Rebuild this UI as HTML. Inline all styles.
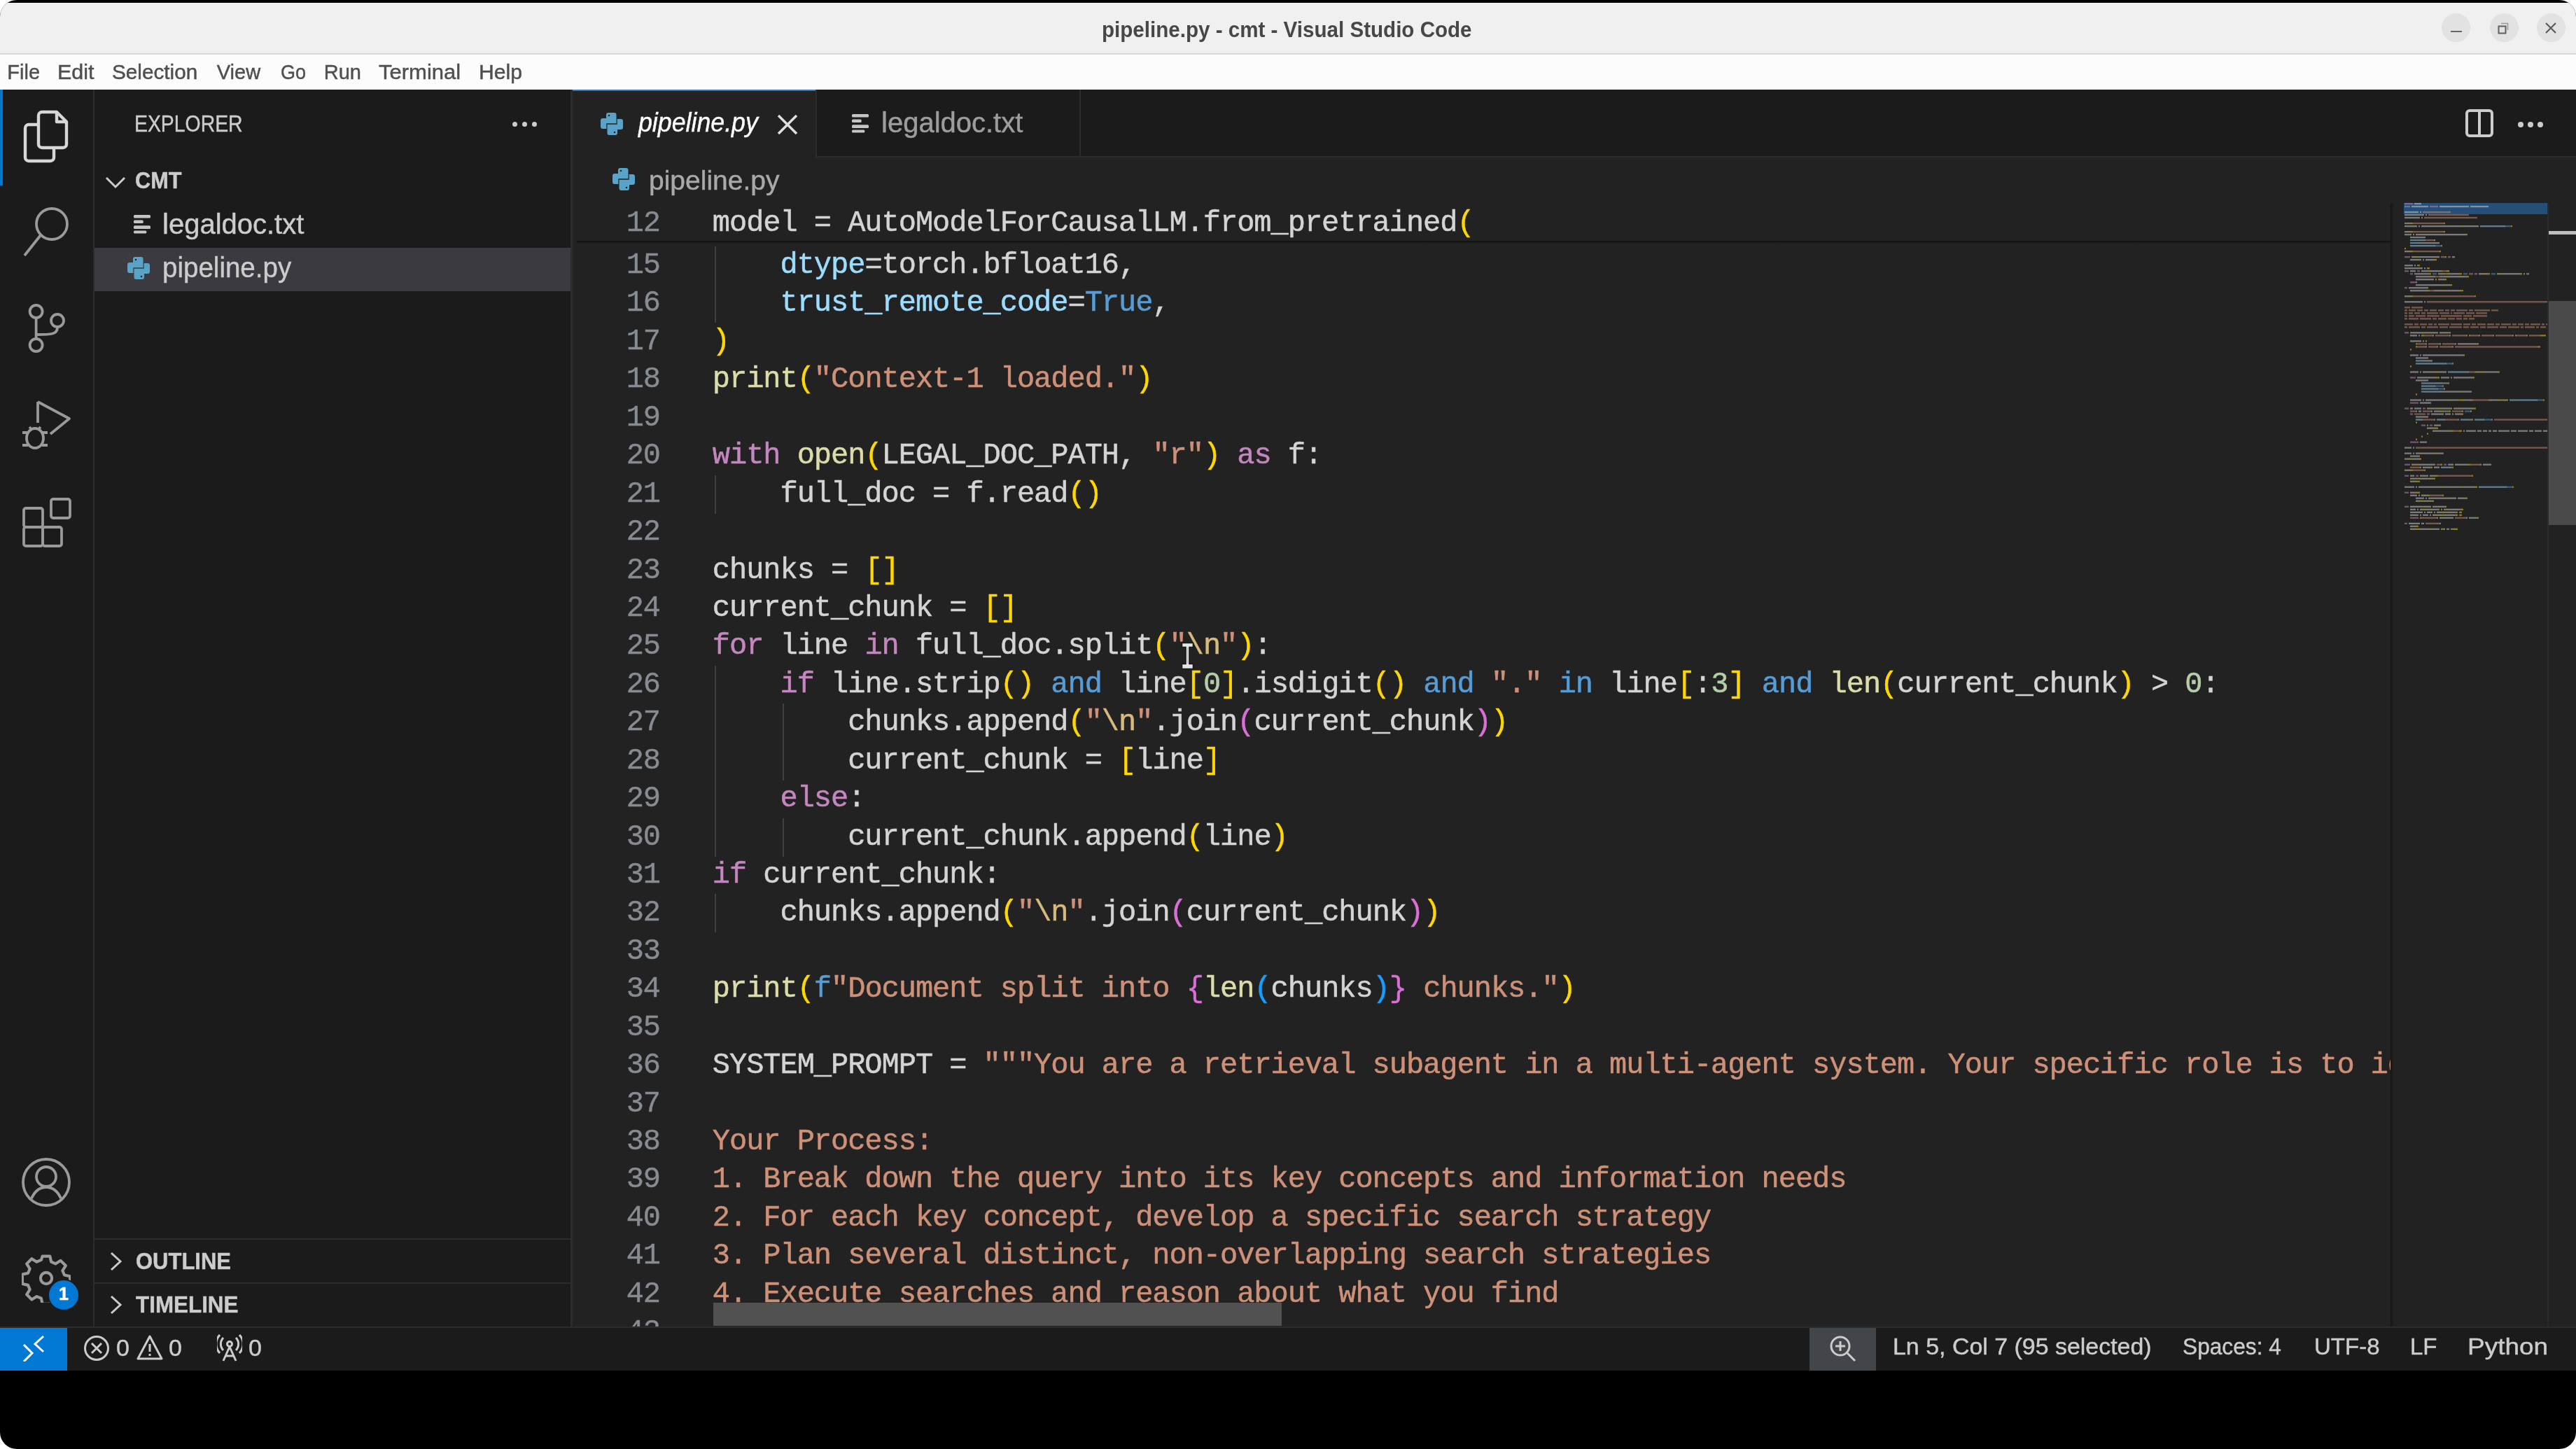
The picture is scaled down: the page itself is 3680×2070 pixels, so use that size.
<!DOCTYPE html>
<html><head><meta charset="utf-8"><title>pipeline.py - cmt - Visual Studio Code</title>
<style>
*{margin:0;padding:0;box-sizing:border-box}
html,body{width:3680px;height:2070px;overflow:hidden;background:#ffffff}
#frame{position:absolute;left:0;top:0;width:3680px;height:2070px;border-radius:24px;overflow:hidden;background:#000}
#wb{position:absolute;left:0;top:0;width:3680px;height:2070px;filter:blur(0.5px)}
.abs{position:absolute}
.ui{font-family:"Liberation Sans",sans-serif;position:absolute;white-space:pre;-webkit-text-stroke:0.45px currentColor}
.ln{position:absolute;left:823px;letter-spacing:-1.030px;-webkit-text-stroke:0.4px currentColor;width:120px;text-align:right;font-family:"Liberation Mono",monospace;font-size:42px;line-height:54.435px;color:#878b92;white-space:pre}
.cl{position:absolute;left:1017.8px;letter-spacing:-1.030px;-webkit-text-stroke:0.5px currentColor;font-family:"Liberation Mono",monospace;font-size:42px;line-height:54.435px;white-space:pre;color:#d4d4d4}
.ig{position:absolute;width:2px;height:54.935px;background:#404040}
</style></head>
<body><div id="frame"><div id="wb">
<div class="abs" style="left:0;top:4px;width:3680px;height:72px;background:#f0f0f0"></div>
<div class="abs" style="left:0;top:76px;width:3680px;height:2px;background:#d9d9d9"></div>
<div class="abs" style="left:0;top:78px;width:3680px;height:50px;background:#fcfcfc"></div>
<div class="ui" style="left:1574px;top:24.5px;font-size:31px;font-weight:bold;color:#474747;line-height:36px;transform:scaleX(0.954);transform-origin:0 0;-webkit-text-stroke:0">pipeline.py - cmt - Visual Studio Code</div>
<div class="abs" style="left:3488.1px;top:19px;width:41px;height:41px;border-radius:50%;background:#e2e2e2"></div>
<div class="abs" style="left:3556.5px;top:19px;width:41px;height:41px;border-radius:50%;background:#e2e2e2"></div>
<div class="abs" style="left:3623.5px;top:19px;width:41px;height:41px;border-radius:50%;background:#e2e2e2"></div>
<div class="abs" style="left:3501px;top:44px;width:16px;height:2.2px;background:#666"></div>
<svg class="abs" style="left:3566px;top:30px" width="20" height="20" viewBox="0 0 20 20"><rect x="3.5" y="7.5" width="10" height="10" fill="none" stroke="#606060" stroke-width="2"/><path d="M7 3.5h9.5v9.5" fill="none" stroke="#9a9a9a" stroke-width="1.5"/></svg>
<svg class="abs" style="left:3634px;top:30px" width="20" height="20" viewBox="0 0 20 20"><path d="M3 3L17 17M17 3L3 17" stroke="#5c5c5c" stroke-width="2.2"/></svg>
<div class="ui" style="left:10.3px;top:87px;font-size:29px;color:#4f4f4f;line-height:33px;transform:scaleX(1.0);transform-origin:0 0">File</div>
<div class="ui" style="left:81.6px;top:87px;font-size:29px;color:#4f4f4f;line-height:33px;transform:scaleX(1.05);transform-origin:0 0">Edit</div>
<div class="ui" style="left:160.3px;top:87px;font-size:29px;color:#4f4f4f;line-height:33px;transform:scaleX(1.025);transform-origin:0 0">Selection</div>
<div class="ui" style="left:309.8px;top:87px;font-size:29px;color:#4f4f4f;line-height:33px;transform:scaleX(1.0);transform-origin:0 0">View</div>
<div class="ui" style="left:400.8px;top:87px;font-size:29px;color:#4f4f4f;line-height:33px;transform:scaleX(0.93);transform-origin:0 0">Go</div>
<div class="ui" style="left:462.8px;top:87px;font-size:29px;color:#4f4f4f;line-height:33px;transform:scaleX(1.0);transform-origin:0 0">Run</div>
<div class="ui" style="left:540.8px;top:87px;font-size:29px;color:#4f4f4f;line-height:33px;transform:scaleX(1.069);transform-origin:0 0">Terminal</div>
<div class="ui" style="left:683.6px;top:87px;font-size:29px;color:#4f4f4f;line-height:33px;transform:scaleX(1.04);transform-origin:0 0">Help</div>
<div class="abs" style="left:0;top:128px;width:3680px;height:1830px;background:#222222"></div>
<div class="abs" style="left:0;top:128px;width:133px;height:1768px;background:#1b1b1b"></div>
<div class="abs" style="left:133px;top:128px;width:2px;height:1768px;background:#2c2c2c"></div>
<div class="abs" style="left:0;top:128px;width:4px;height:137px;background:#0078d4"></div>
<div class="abs" style="left:135px;top:128px;width:680px;height:1768px;background:#1b1b1b"></div>
<div class="abs" style="left:815px;top:128px;width:3px;height:1768px;background:#2c2c2c"></div>
<div class="abs" style="left:818px;top:128px;width:2862px;height:95px;background:#1b1b1b"></div>
<div class="abs" style="left:1165px;top:223px;width:2515px;height:2px;background:#2c2c2c"></div>
<div class="abs" style="left:818px;top:128px;width:347px;height:97px;background:#222222"></div>
<div class="abs" style="left:818px;top:127.5px;width:347px;height:2px;background:#3778b8"></div>
<div class="abs" style="left:1165px;top:128px;width:2px;height:95px;background:#2c2c2c"></div>
<div class="abs" style="left:1542px;top:128px;width:2px;height:95px;background:#2c2c2c"></div>
<div class="abs" style="left:0;top:1895px;width:3680px;height:2px;background:#2c2c2c"></div>
<div class="abs" style="left:0;top:1897px;width:3680px;height:61px;background:#1b1b1b"></div>
<div class="abs" style="left:0;top:1897px;width:96px;height:61px;background:#0078d4"></div>
<div class="abs" style="left:2585px;top:1897px;width:95px;height:61px;background:#42454a"></div>
<div class="ui" style="left:192px;top:157px;font-size:34px;color:#cccccc;line-height:38px;transform:scaleX(0.835);transform-origin:0 0">EXPLORER</div>
<div class="abs" style="left:732px;top:174px;width:7px;height:7px;border-radius:50%;background:#cccccc"></div>
<div class="abs" style="left:746px;top:174px;width:7px;height:7px;border-radius:50%;background:#cccccc"></div>
<div class="abs" style="left:760px;top:174px;width:7px;height:7px;border-radius:50%;background:#cccccc"></div>
<svg class="abs" style="left:150px;top:252px" width="30" height="18" viewBox="0 0 30 18"><path d="M2 2L15 15L28 2" fill="none" stroke="#cccccc" stroke-width="3"/></svg>
<div class="ui" style="left:193px;top:239px;font-size:33px;font-weight:bold;color:#cccccc;line-height:38px;transform:scaleX(0.93);transform-origin:0 0">CMT</div>
<svg class="abs" style="left:191px;top:307px" width="25" height="27" viewBox="0 0 25 27">
<g fill="#c5c5c5"><rect x="0" y="0" width="24" height="4.6" rx="1.5"/><rect x="0" y="7.6" width="13.7" height="4.5" rx="1.5"/>
<rect x="0" y="15.2" width="24" height="4.7" rx="1.5"/><rect x="0" y="22.6" width="18.3" height="4" rx="1.5"/></g></svg>
<div class="ui" style="left:232px;top:297px;font-size:40px;color:#cccccc;line-height:46px">legaldoc.txt</div>
<div class="abs" style="left:135px;top:354px;width:680px;height:62px;background:#3a3a40"></div>
<svg class="abs" style="left:182px;top:367px" width="32" height="32" viewBox="0 0 32 32">
<path fill="#5aa3c8" d="M8 3a3 3 0 0 1 3-3h8.5a3 3 0 0 1 3 3V15.3H8.3V23H3a3 3 0 0 1-3-3V11a3 3 0 0 1 3-3h5z"/><path fill="#5aa3c8" transform="rotate(180 16 16)" d="M8 3a3 3 0 0 1 3-3h8.5a3 3 0 0 1 3 3V15.3H8.3V23H3a3 3 0 0 1-3-3V11a3 3 0 0 1 3-3h5z"/>
<circle cx="12" cy="4" r="1.3" fill="#222222"/><circle cx="20" cy="28" r="1.3" fill="#222222"/>
</svg>
<div class="ui" style="left:232px;top:359px;font-size:40px;color:#cccccc;line-height:46px;transform:scaleX(0.963);transform-origin:0 0">pipeline.py</div>
<div class="abs" style="left:135px;top:1769px;width:680px;height:2px;background:#2c2c2c"></div>
<div class="abs" style="left:135px;top:1832px;width:680px;height:2px;background:#2c2c2c"></div>
<svg class="abs" style="left:156px;top:1788px" width="20" height="28" viewBox="0 0 20 28"><path d="M3 2L16 14L3 26" fill="none" stroke="#cccccc" stroke-width="3"/></svg>
<div class="ui" style="left:194px;top:1782px;font-size:34px;font-weight:bold;color:#cccccc;line-height:38px;transform:scaleX(0.911);transform-origin:0 0">OUTLINE</div>
<svg class="abs" style="left:156px;top:1850px" width="20" height="28" viewBox="0 0 20 28"><path d="M3 2L16 14L3 26" fill="none" stroke="#cccccc" stroke-width="3"/></svg>
<div class="ui" style="left:194px;top:1844px;font-size:34px;font-weight:bold;color:#cccccc;line-height:38px;transform:scaleX(0.923);transform-origin:0 0">TIMELINE</div>
<svg class="abs" style="left:33px;top:157px" width="66" height="76" viewBox="0 0 66 76"><g fill="none" stroke="#d7d7d7" stroke-width="4.4" stroke-linejoin="round">
<path d="M22 21H8a5 5 0 0 0-5 5v42a5 5 0 0 0 5 5h31a5 5 0 0 0 5-5v-14"/>
<path d="M22 8a5 5 0 0 1 5-5h21l14 14v32a5 5 0 0 1-5 5H27a5 5 0 0 1-5-5z"/><path d="M48 3v14h14"/></g></svg>
<svg class="abs" style="left:30px;top:292px" width="74" height="78" viewBox="0 0 74 78"><g fill="none" stroke="#9a9a9a" stroke-width="3.8"><circle cx="44" cy="28" r="22"/><path d="M28 44L5 73"/></g></svg>
<svg class="abs" style="left:36px;top:430px" width="62" height="78" viewBox="0 0 62 78"><g fill="none" stroke="#9a9a9a" stroke-width="3.8"><circle cx="15.6" cy="15" r="9"/><circle cx="15.6" cy="63" r="9"/><circle cx="46" cy="28" r="9"/><path d="M15.6 25v28"/><path d="M46 38c0 10-10 10-30 10"/></g></svg>
<svg class="abs" style="left:28px;top:570px" width="76" height="76" viewBox="0 0 76 76"><g fill="none" stroke="#9a9a9a" stroke-width="3.8" stroke-linejoin="round"><path d="M26 4V34M26 4L71 28L44 50"/>
<ellipse cx="22" cy="56" rx="12" ry="14"/><path d="M4 48h8M4 66h8M32 48h8M32 66h8M14 40l4 4M30 40l-4 4"/></g></svg>
<svg class="abs" style="left:30px;top:709px" width="74" height="74" viewBox="0 0 74 74"><g fill="none" stroke="#9a9a9a" stroke-width="3.8" stroke-linejoin="round"><rect x="4" y="17" width="27" height="27" rx="3"/><rect x="4" y="44" width="27" height="27" rx="3"/><rect x="31" y="44" width="27" height="27" rx="3"/><rect x="43" y="4" width="27" height="27" rx="3"/></g></svg>
<svg class="abs" style="left:30px;top:1652px" width="74" height="74" viewBox="0 0 74 74"><g fill="none" stroke="#9a9a9a" stroke-width="3.8"><circle cx="36" cy="37" r="33"/><circle cx="36" cy="29" r="14"/><path d="M15 60c5-11 12-16 21-16s16 5 21 16"/></g></svg>
<svg class="abs" style="left:31px;top:1791px" width="70" height="70" viewBox="0 0 78 78"><g fill="none" stroke="#9a9a9a" stroke-width="4.6" stroke-linejoin="round"><path d="M33 4h12l2 9 7 3 8-5 8 8-5 8 3 7 9 2v12l-9 2-3 7 5 8-8 8-8-5-7 3-2 9H33l-2-9-7-3-8 5-8-8 5-8-3-7-9-2V33l9-2 3-7-5-8 8-8 8 5 7-3z"/><circle cx="39" cy="39" r="9"/></g></svg>
<div class="abs" style="left:68px;top:1827px;width:46px;height:46px;border-radius:50%;background:#0078d4;border:2px solid #1b1b1b"></div>
<div class="ui" style="left:68px;top:1833px;width:46px;text-align:center;font-size:25px;font-weight:bold;color:#fff;line-height:30px">1</div>
<svg class="abs" style="left:858px;top:161px" width="32" height="32" viewBox="0 0 32 32">
<path fill="#5aa3c8" d="M8 3a3 3 0 0 1 3-3h8.5a3 3 0 0 1 3 3V15.3H8.3V23H3a3 3 0 0 1-3-3V11a3 3 0 0 1 3-3h5z"/><path fill="#5aa3c8" transform="rotate(180 16 16)" d="M8 3a3 3 0 0 1 3-3h8.5a3 3 0 0 1 3 3V15.3H8.3V23H3a3 3 0 0 1-3-3V11a3 3 0 0 1 3-3h5z"/>
<circle cx="12" cy="4" r="1.3" fill="#222222"/><circle cx="20" cy="28" r="1.3" fill="#222222"/>
</svg>
<div class="ui" style="left:912px;top:152px;font-size:39px;font-style:italic;color:#ffffff;line-height:46px;transform:scaleX(0.916);transform-origin:0 0">pipeline.py</div>
<svg class="abs" style="left:1110px;top:164px" width="30" height="28" viewBox="0 0 30 28"><path d="M2 1L28 27M28 1L2 27" stroke="#e0e0e0" stroke-width="3.5"/></svg>
<svg class="abs" style="left:1217px;top:163px" width="25" height="27" viewBox="0 0 25 27">
<g fill="#c5c5c5"><rect x="0" y="0" width="24" height="4.6" rx="1.5"/><rect x="0" y="7.6" width="13.7" height="4.5" rx="1.5"/>
<rect x="0" y="15.2" width="24" height="4.7" rx="1.5"/><rect x="0" y="22.6" width="18.3" height="4" rx="1.5"/></g></svg>
<div class="ui" style="left:1259px;top:152px;font-size:40px;color:#9d9d9d;line-height:46px">legaldoc.txt</div>
<svg class="abs" style="left:3522px;top:156px" width="40" height="40" viewBox="0 0 40 40"><g fill="none" stroke="#cccccc" stroke-width="4"><rect x="2" y="2" width="36" height="36" rx="4"/><path d="M20 2v36"/></g></svg>
<div class="abs" style="left:3597px;top:174px;width:8px;height:8px;border-radius:50%;background:#cccccc"></div>
<div class="abs" style="left:3611px;top:174px;width:8px;height:8px;border-radius:50%;background:#cccccc"></div>
<div class="abs" style="left:3625px;top:174px;width:8px;height:8px;border-radius:50%;background:#cccccc"></div>
<svg class="abs" style="left:875px;top:240px" width="32" height="32" viewBox="0 0 32 32">
<path fill="#5aa3c8" d="M8 3a3 3 0 0 1 3-3h8.5a3 3 0 0 1 3 3V15.3H8.3V23H3a3 3 0 0 1-3-3V11a3 3 0 0 1 3-3h5z"/><path fill="#5aa3c8" transform="rotate(180 16 16)" d="M8 3a3 3 0 0 1 3-3h8.5a3 3 0 0 1 3 3V15.3H8.3V23H3a3 3 0 0 1-3-3V11a3 3 0 0 1 3-3h5z"/>
<circle cx="12" cy="4" r="1.3" fill="#222222"/><circle cx="20" cy="28" r="1.3" fill="#222222"/>
</svg>
<div class="ui" style="left:927px;top:235px;font-size:39px;color:#a9a9a9;line-height:46px">pipeline.py</div>
<div class="abs" id="ed" style="left:818px;top:290px;width:2600px;height:1605px;overflow:hidden">
<div class="abs" style="left:-818px;top:-290px;width:3680px;height:2070px">
<div class="ln" style="top:352.05px">15</div>
<div class="cl" style="top:352.05px"><span style="color:#d4d4d4">    </span><span style="color:#9cdcfe">dtype</span><span style="color:#d4d4d4">=</span><span style="color:#d4d4d4">torch.bfloat16,</span></div>
<div class="ig" style="left:1020.8px;top:352.05px"></div>
<div class="ln" style="top:406.49px">16</div>
<div class="cl" style="top:406.49px"><span style="color:#d4d4d4">    </span><span style="color:#9cdcfe">trust_remote_code</span><span style="color:#d4d4d4">=</span><span style="color:#569cd6">True</span><span style="color:#d4d4d4">,</span></div>
<div class="ig" style="left:1020.8px;top:406.49px"></div>
<div class="ln" style="top:460.92px">17</div>
<div class="cl" style="top:460.92px"><span style="color:#ffd700">)</span></div>
<div class="ln" style="top:515.36px">18</div>
<div class="cl" style="top:515.36px"><span style="color:#dcdcaa">print</span><span style="color:#ffd700">(</span><span style="color:#ce9178">&quot;Context-1 loaded.&quot;</span><span style="color:#ffd700">)</span></div>
<div class="ln" style="top:569.79px">19</div>
<div class="ln" style="top:624.23px">20</div>
<div class="cl" style="top:624.23px"><span style="color:#c586c0">with</span><span style="color:#d4d4d4"> </span><span style="color:#dcdcaa">open</span><span style="color:#ffd700">(</span><span style="color:#d4d4d4">LEGAL_DOC_PATH, </span><span style="color:#ce9178">&quot;r&quot;</span><span style="color:#ffd700">)</span><span style="color:#d4d4d4"> </span><span style="color:#c586c0">as</span><span style="color:#d4d4d4"> f:</span></div>
<div class="ln" style="top:678.66px">21</div>
<div class="cl" style="top:678.66px"><span style="color:#d4d4d4">    full_doc = f.read</span><span style="color:#ffd700">()</span></div>
<div class="ig" style="left:1020.8px;top:678.66px"></div>
<div class="ln" style="top:733.10px">22</div>
<div class="ln" style="top:787.53px">23</div>
<div class="cl" style="top:787.53px"><span style="color:#d4d4d4">chunks = </span><span style="color:#ffd700">[]</span></div>
<div class="ln" style="top:841.97px">24</div>
<div class="cl" style="top:841.97px"><span style="color:#d4d4d4">current_chunk = </span><span style="color:#ffd700">[]</span></div>
<div class="ln" style="top:896.40px">25</div>
<div class="cl" style="top:896.40px"><span style="color:#c586c0">for</span><span style="color:#d4d4d4"> line </span><span style="color:#c586c0">in</span><span style="color:#d4d4d4"> full_doc.split</span><span style="color:#ffd700">(</span><span style="color:#ce9178">&quot;</span><span style="color:#d7ba7d">\n</span><span style="color:#ce9178">&quot;</span><span style="color:#ffd700">)</span><span style="color:#d4d4d4">:</span></div>
<div class="ln" style="top:950.84px">26</div>
<div class="cl" style="top:950.84px"><span style="color:#d4d4d4">    </span><span style="color:#c586c0">if</span><span style="color:#d4d4d4"> line.strip</span><span style="color:#ffd700">()</span><span style="color:#d4d4d4"> </span><span style="color:#569cd6">and</span><span style="color:#d4d4d4"> line</span><span style="color:#ffd700">[</span><span style="color:#b5cea8">0</span><span style="color:#ffd700">]</span><span style="color:#d4d4d4">.isdigit</span><span style="color:#ffd700">()</span><span style="color:#d4d4d4"> </span><span style="color:#569cd6">and</span><span style="color:#d4d4d4"> </span><span style="color:#ce9178">&quot;.&quot;</span><span style="color:#d4d4d4"> </span><span style="color:#569cd6">in</span><span style="color:#d4d4d4"> line</span><span style="color:#ffd700">[</span><span style="color:#d4d4d4">:</span><span style="color:#b5cea8">3</span><span style="color:#ffd700">]</span><span style="color:#d4d4d4"> </span><span style="color:#569cd6">and</span><span style="color:#d4d4d4"> </span><span style="color:#dcdcaa">len</span><span style="color:#ffd700">(</span><span style="color:#d4d4d4">current_chunk</span><span style="color:#ffd700">)</span><span style="color:#d4d4d4"> &gt; </span><span style="color:#b5cea8">0</span><span style="color:#d4d4d4">:</span></div>
<div class="ig" style="left:1020.8px;top:950.84px"></div>
<div class="ln" style="top:1005.27px">27</div>
<div class="cl" style="top:1005.27px"><span style="color:#d4d4d4">        chunks.append</span><span style="color:#ffd700">(</span><span style="color:#ce9178">&quot;</span><span style="color:#d7ba7d">\n</span><span style="color:#ce9178">&quot;</span><span style="color:#d4d4d4">.join</span><span style="color:#da70d6">(</span><span style="color:#d4d4d4">current_chunk</span><span style="color:#da70d6">)</span><span style="color:#ffd700">)</span></div>
<div class="ig" style="left:1020.8px;top:1005.27px"></div>
<div class="ig" style="left:1117.5px;top:1005.27px"></div>
<div class="ln" style="top:1059.70px">28</div>
<div class="cl" style="top:1059.70px"><span style="color:#d4d4d4">        current_chunk = </span><span style="color:#ffd700">[</span><span style="color:#d4d4d4">line</span><span style="color:#ffd700">]</span></div>
<div class="ig" style="left:1020.8px;top:1059.70px"></div>
<div class="ig" style="left:1117.5px;top:1059.70px"></div>
<div class="ln" style="top:1114.14px">29</div>
<div class="cl" style="top:1114.14px"><span style="color:#d4d4d4">    </span><span style="color:#c586c0">else</span><span style="color:#d4d4d4">:</span></div>
<div class="ig" style="left:1020.8px;top:1114.14px"></div>
<div class="ln" style="top:1168.58px">30</div>
<div class="cl" style="top:1168.58px"><span style="color:#d4d4d4">        current_chunk.append</span><span style="color:#ffd700">(</span><span style="color:#d4d4d4">line</span><span style="color:#ffd700">)</span></div>
<div class="ig" style="left:1020.8px;top:1168.58px"></div>
<div class="ig" style="left:1117.5px;top:1168.58px"></div>
<div class="ln" style="top:1223.01px">31</div>
<div class="cl" style="top:1223.01px"><span style="color:#c586c0">if</span><span style="color:#d4d4d4"> current_chunk:</span></div>
<div class="ln" style="top:1277.44px">32</div>
<div class="cl" style="top:1277.44px"><span style="color:#d4d4d4">    chunks.append</span><span style="color:#ffd700">(</span><span style="color:#ce9178">&quot;</span><span style="color:#d7ba7d">\n</span><span style="color:#ce9178">&quot;</span><span style="color:#d4d4d4">.join</span><span style="color:#da70d6">(</span><span style="color:#d4d4d4">current_chunk</span><span style="color:#da70d6">)</span><span style="color:#ffd700">)</span></div>
<div class="ig" style="left:1020.8px;top:1277.44px"></div>
<div class="ln" style="top:1331.88px">33</div>
<div class="ln" style="top:1386.32px">34</div>
<div class="cl" style="top:1386.32px"><span style="color:#dcdcaa">print</span><span style="color:#ffd700">(</span><span style="color:#569cd6">f</span><span style="color:#ce9178">&quot;Document split into </span><span style="color:#da70d6">{</span><span style="color:#dcdcaa">len</span><span style="color:#179fff">(</span><span style="color:#d4d4d4">chunks</span><span style="color:#179fff">)</span><span style="color:#da70d6">}</span><span style="color:#ce9178"> chunks.&quot;</span><span style="color:#ffd700">)</span></div>
<div class="ln" style="top:1440.75px">35</div>
<div class="ln" style="top:1495.18px">36</div>
<div class="cl" style="top:1495.18px"><span style="color:#d4d4d4">SYSTEM_PROMPT = </span><span style="color:#ce9178">&quot;&quot;&quot;You are a retrieval subagent in a multi-agent system. Your specific role is to identify</span></div>
<div class="ln" style="top:1549.62px">37</div>
<div class="ln" style="top:1604.06px">38</div>
<div class="cl" style="top:1604.06px"><span style="color:#ce9178">Your Process:</span></div>
<div class="ln" style="top:1658.49px">39</div>
<div class="cl" style="top:1658.49px"><span style="color:#ce9178">1. Break down the query into its key concepts and information needs</span></div>
<div class="ln" style="top:1712.92px">40</div>
<div class="cl" style="top:1712.92px"><span style="color:#ce9178">2. For each key concept, develop a specific search strategy</span></div>
<div class="ln" style="top:1767.36px">41</div>
<div class="cl" style="top:1767.36px"><span style="color:#ce9178">3. Plan several distinct, non-overlapping search strategies</span></div>
<div class="ln" style="top:1821.80px">42</div>
<div class="cl" style="top:1821.80px"><span style="color:#ce9178">4. Execute searches and reason about what you find</span></div>
<div class="ln" style="top:1876.23px">43</div>
</div></div>
<div class="abs" style="left:818px;top:290px;width:2600px;height:54px;background:#222222"></div>
<div class="ln" style="top:292.08px">12</div>
<div class="cl" style="top:292.08px"><span style="color:#d4d4d4">model = AutoModelForCausalLM.from_pretrained</span><span style="color:#ffd700">(</span></div>
<div class="abs" style="left:824px;top:344px;width:2594px;height:4px;background:linear-gradient(#111,#22222200)"></div>
<div class="abs" style="left:1019px;top:1861px;width:812px;height:33px;background:rgba(121,121,121,0.55)"></div>
<div class="abs" style="left:3415px;top:290px;width:5px;height:1605px;background:linear-gradient(90deg,#151515,#222222)"></div>
<div class="abs" style="left:3434px;top:290px;width:205px;height:16px;background:#264f78"></div>
<div class="abs" style="left:3639px;top:290px;width:2px;height:1605px;background:#2a2a2a"></div>
<div class="abs" style="left:3641px;top:430px;width:39px;height:320px;background:#4a4a4a"></div>
<div class="abs" style="left:3641px;top:330px;width:39px;height:5px;background:#bfbfbf"></div>
<svg class="abs" style="left:0;top:0;pointer-events:none" width="3680" height="2070"><defs><filter id="mmb" x="-1%" y="-1%" width="102%" height="102%"><feGaussianBlur stdDeviation="0.7"/></filter></defs><g opacity="0.5" filter="url(#mmb)"><rect x="3435.0" y="289.9" width="12.0" height="2.3" fill="#c586c0"/><rect x="3449.0" y="289.9" width="10.0" height="2.3" fill="#d4d4d4"/><rect x="3435.0" y="293.9" width="8.0" height="2.3" fill="#c586c0"/><rect x="3445.0" y="293.9" width="24.0" height="2.3" fill="#d4d4d4"/><rect x="3471.0" y="293.9" width="12.0" height="2.3" fill="#c586c0"/><rect x="3485.0" y="293.9" width="40.0" height="2.3" fill="#d4d4d4"/><rect x="3525.0" y="293.9" width="2.0" height="2.3" fill="#d4d4d4"/><rect x="3529.0" y="293.9" width="26.0" height="2.3" fill="#d4d4d4"/><rect x="3435.0" y="301.9" width="20.0" height="2.3" fill="#d4d4d4"/><rect x="3457.0" y="301.9" width="2.0" height="2.3" fill="#d4d4d4"/><rect x="3461.0" y="301.9" width="40.0" height="2.3" fill="#ce9178"/><rect x="3435.0" y="305.9" width="28.0" height="2.3" fill="#d4d4d4"/><rect x="3465.0" y="305.9" width="2.0" height="2.3" fill="#d4d4d4"/><rect x="3469.0" y="305.9" width="58.0" height="2.3" fill="#ce9178"/><rect x="3435.0" y="309.9" width="22.0" height="2.3" fill="#d4d4d4"/><rect x="3459.0" y="309.9" width="2.0" height="2.3" fill="#d4d4d4"/><rect x="3463.0" y="309.9" width="76.0" height="2.3" fill="#ce9178"/><rect x="3435.0" y="317.9" width="10.0" height="2.3" fill="#dcdcaa"/><rect x="3445.0" y="317.9" width="2.0" height="2.3" fill="#ffd700"/><rect x="3447.0" y="317.9" width="44.0" height="2.3" fill="#ce9178"/><rect x="3491.0" y="317.9" width="2.0" height="2.3" fill="#ffd700"/><rect x="3435.0" y="322.0" width="18.0" height="2.3" fill="#d4d4d4"/><rect x="3455.0" y="322.0" width="2.0" height="2.3" fill="#d4d4d4"/><rect x="3459.0" y="322.0" width="26.0" height="2.3" fill="#d4d4d4"/><rect x="3485.0" y="322.0" width="2.0" height="2.3" fill="#d4d4d4"/><rect x="3487.0" y="322.0" width="30.0" height="2.3" fill="#d4d4d4"/><rect x="3517.0" y="322.0" width="2.0" height="2.3" fill="#ffd700"/><rect x="3519.0" y="322.0" width="20.0" height="2.3" fill="#d4d4d4"/><rect x="3539.0" y="322.0" width="2.0" height="2.3" fill="#d4d4d4"/><rect x="3543.0" y="322.0" width="34.0" height="2.3" fill="#9cdcfe"/><rect x="3577.0" y="322.0" width="2.0" height="2.3" fill="#d4d4d4"/><rect x="3579.0" y="322.0" width="8.0" height="2.3" fill="#569cd6"/><rect x="3587.0" y="322.0" width="2.0" height="2.3" fill="#ffd700"/><rect x="3435.0" y="330.0" width="10.0" height="2.3" fill="#dcdcaa"/><rect x="3445.0" y="330.0" width="2.0" height="2.3" fill="#ffd700"/><rect x="3447.0" y="330.0" width="44.0" height="2.3" fill="#ce9178"/><rect x="3491.0" y="330.0" width="2.0" height="2.3" fill="#ffd700"/><rect x="3435.0" y="334.0" width="10.0" height="2.3" fill="#d4d4d4"/><rect x="3447.0" y="334.0" width="2.0" height="2.3" fill="#d4d4d4"/><rect x="3451.0" y="334.0" width="40.0" height="2.3" fill="#d4d4d4"/><rect x="3491.0" y="334.0" width="2.0" height="2.3" fill="#d4d4d4"/><rect x="3493.0" y="334.0" width="30.0" height="2.3" fill="#d4d4d4"/><rect x="3523.0" y="334.0" width="2.0" height="2.3" fill="#ffd700"/><rect x="3443.0" y="338.0" width="20.0" height="2.3" fill="#d4d4d4"/><rect x="3463.0" y="338.0" width="2.0" height="2.3" fill="#d4d4d4"/><rect x="3443.0" y="342.0" width="20.0" height="2.3" fill="#9cdcfe"/><rect x="3463.0" y="342.0" width="2.0" height="2.3" fill="#d4d4d4"/><rect x="3465.0" y="342.0" width="12.0" height="2.3" fill="#ce9178"/><rect x="3477.0" y="342.0" width="2.0" height="2.3" fill="#d4d4d4"/><rect x="3443.0" y="346.0" width="10.0" height="2.3" fill="#9cdcfe"/><rect x="3453.0" y="346.0" width="2.0" height="2.3" fill="#d4d4d4"/><rect x="3455.0" y="346.0" width="10.0" height="2.3" fill="#d4d4d4"/><rect x="3465.0" y="346.0" width="2.0" height="2.3" fill="#d4d4d4"/><rect x="3467.0" y="346.0" width="16.0" height="2.3" fill="#d4d4d4"/><rect x="3483.0" y="346.0" width="2.0" height="2.3" fill="#d4d4d4"/><rect x="3443.0" y="350.0" width="34.0" height="2.3" fill="#9cdcfe"/><rect x="3477.0" y="350.0" width="2.0" height="2.3" fill="#d4d4d4"/><rect x="3479.0" y="350.0" width="8.0" height="2.3" fill="#569cd6"/><rect x="3487.0" y="350.0" width="2.0" height="2.3" fill="#d4d4d4"/><rect x="3435.0" y="354.0" width="2.0" height="2.3" fill="#ffd700"/><rect x="3435.0" y="358.0" width="10.0" height="2.3" fill="#dcdcaa"/><rect x="3445.0" y="358.0" width="2.0" height="2.3" fill="#ffd700"/><rect x="3447.0" y="358.0" width="38.0" height="2.3" fill="#ce9178"/><rect x="3485.0" y="358.0" width="2.0" height="2.3" fill="#ffd700"/><rect x="3435.0" y="366.0" width="8.0" height="2.3" fill="#c586c0"/><rect x="3445.0" y="366.0" width="8.0" height="2.3" fill="#dcdcaa"/><rect x="3453.0" y="366.0" width="2.0" height="2.3" fill="#ffd700"/><rect x="3455.0" y="366.0" width="28.0" height="2.3" fill="#d4d4d4"/><rect x="3483.0" y="366.0" width="2.0" height="2.3" fill="#d4d4d4"/><rect x="3487.0" y="366.0" width="6.0" height="2.3" fill="#ce9178"/><rect x="3493.0" y="366.0" width="2.0" height="2.3" fill="#ffd700"/><rect x="3497.0" y="366.0" width="4.0" height="2.3" fill="#c586c0"/><rect x="3503.0" y="366.0" width="2.0" height="2.3" fill="#d4d4d4"/><rect x="3505.0" y="366.0" width="2.0" height="2.3" fill="#d4d4d4"/><rect x="3443.0" y="370.0" width="16.0" height="2.3" fill="#d4d4d4"/><rect x="3461.0" y="370.0" width="2.0" height="2.3" fill="#d4d4d4"/><rect x="3465.0" y="370.0" width="2.0" height="2.3" fill="#d4d4d4"/><rect x="3467.0" y="370.0" width="2.0" height="2.3" fill="#d4d4d4"/><rect x="3469.0" y="370.0" width="8.0" height="2.3" fill="#d4d4d4"/><rect x="3477.0" y="370.0" width="2.0" height="2.3" fill="#ffd700"/><rect x="3479.0" y="370.0" width="2.0" height="2.3" fill="#ffd700"/><rect x="3435.0" y="378.1" width="12.0" height="2.3" fill="#d4d4d4"/><rect x="3449.0" y="378.1" width="2.0" height="2.3" fill="#d4d4d4"/><rect x="3453.0" y="378.1" width="2.0" height="2.3" fill="#ffd700"/><rect x="3455.0" y="378.1" width="2.0" height="2.3" fill="#ffd700"/><rect x="3435.0" y="382.1" width="26.0" height="2.3" fill="#d4d4d4"/><rect x="3463.0" y="382.1" width="2.0" height="2.3" fill="#d4d4d4"/><rect x="3467.0" y="382.1" width="2.0" height="2.3" fill="#ffd700"/><rect x="3469.0" y="382.1" width="2.0" height="2.3" fill="#ffd700"/><rect x="3435.0" y="386.1" width="6.0" height="2.3" fill="#c586c0"/><rect x="3443.0" y="386.1" width="8.0" height="2.3" fill="#d4d4d4"/><rect x="3453.0" y="386.1" width="4.0" height="2.3" fill="#c586c0"/><rect x="3459.0" y="386.1" width="16.0" height="2.3" fill="#d4d4d4"/><rect x="3475.0" y="386.1" width="2.0" height="2.3" fill="#d4d4d4"/><rect x="3477.0" y="386.1" width="10.0" height="2.3" fill="#d4d4d4"/><rect x="3487.0" y="386.1" width="2.0" height="2.3" fill="#ffd700"/><rect x="3489.0" y="386.1" width="6.0" height="2.3" fill="#ce9178"/><rect x="3495.0" y="386.1" width="2.0" height="2.3" fill="#ffd700"/><rect x="3497.0" y="386.1" width="2.0" height="2.3" fill="#d4d4d4"/><rect x="3443.0" y="390.1" width="4.0" height="2.3" fill="#c586c0"/><rect x="3449.0" y="390.1" width="8.0" height="2.3" fill="#d4d4d4"/><rect x="3457.0" y="390.1" width="2.0" height="2.3" fill="#d4d4d4"/><rect x="3459.0" y="390.1" width="10.0" height="2.3" fill="#d4d4d4"/><rect x="3469.0" y="390.1" width="2.0" height="2.3" fill="#ffd700"/><rect x="3471.0" y="390.1" width="2.0" height="2.3" fill="#ffd700"/><rect x="3475.0" y="390.1" width="6.0" height="2.3" fill="#569cd6"/><rect x="3483.0" y="390.1" width="8.0" height="2.3" fill="#d4d4d4"/><rect x="3491.0" y="390.1" width="2.0" height="2.3" fill="#ffd700"/><rect x="3493.0" y="390.1" width="2.0" height="2.3" fill="#b5cea8"/><rect x="3495.0" y="390.1" width="2.0" height="2.3" fill="#ffd700"/><rect x="3497.0" y="390.1" width="2.0" height="2.3" fill="#d4d4d4"/><rect x="3499.0" y="390.1" width="14.0" height="2.3" fill="#d4d4d4"/><rect x="3513.0" y="390.1" width="2.0" height="2.3" fill="#ffd700"/><rect x="3515.0" y="390.1" width="2.0" height="2.3" fill="#ffd700"/><rect x="3519.0" y="390.1" width="6.0" height="2.3" fill="#569cd6"/><rect x="3527.0" y="390.1" width="6.0" height="2.3" fill="#ce9178"/><rect x="3535.0" y="390.1" width="4.0" height="2.3" fill="#c586c0"/><rect x="3541.0" y="390.1" width="8.0" height="2.3" fill="#d4d4d4"/><rect x="3549.0" y="390.1" width="2.0" height="2.3" fill="#ffd700"/><rect x="3551.0" y="390.1" width="2.0" height="2.3" fill="#d4d4d4"/><rect x="3553.0" y="390.1" width="2.0" height="2.3" fill="#b5cea8"/><rect x="3555.0" y="390.1" width="2.0" height="2.3" fill="#ffd700"/><rect x="3559.0" y="390.1" width="6.0" height="2.3" fill="#569cd6"/><rect x="3567.0" y="390.1" width="6.0" height="2.3" fill="#dcdcaa"/><rect x="3573.0" y="390.1" width="2.0" height="2.3" fill="#ffd700"/><rect x="3575.0" y="390.1" width="26.0" height="2.3" fill="#d4d4d4"/><rect x="3601.0" y="390.1" width="2.0" height="2.3" fill="#ffd700"/><rect x="3605.0" y="390.1" width="2.0" height="2.3" fill="#d4d4d4"/><rect x="3609.0" y="390.1" width="2.0" height="2.3" fill="#b5cea8"/><rect x="3611.0" y="390.1" width="2.0" height="2.3" fill="#d4d4d4"/><rect x="3451.0" y="394.1" width="12.0" height="2.3" fill="#d4d4d4"/><rect x="3463.0" y="394.1" width="2.0" height="2.3" fill="#d4d4d4"/><rect x="3465.0" y="394.1" width="12.0" height="2.3" fill="#d4d4d4"/><rect x="3477.0" y="394.1" width="2.0" height="2.3" fill="#ffd700"/><rect x="3479.0" y="394.1" width="6.0" height="2.3" fill="#ce9178"/><rect x="3485.0" y="394.1" width="2.0" height="2.3" fill="#d4d4d4"/><rect x="3487.0" y="394.1" width="8.0" height="2.3" fill="#d4d4d4"/><rect x="3495.0" y="394.1" width="2.0" height="2.3" fill="#ffd700"/><rect x="3497.0" y="394.1" width="26.0" height="2.3" fill="#d4d4d4"/><rect x="3523.0" y="394.1" width="2.0" height="2.3" fill="#ffd700"/><rect x="3525.0" y="394.1" width="2.0" height="2.3" fill="#ffd700"/><rect x="3451.0" y="398.1" width="26.0" height="2.3" fill="#d4d4d4"/><rect x="3479.0" y="398.1" width="2.0" height="2.3" fill="#d4d4d4"/><rect x="3483.0" y="398.1" width="2.0" height="2.3" fill="#ffd700"/><rect x="3485.0" y="398.1" width="8.0" height="2.3" fill="#d4d4d4"/><rect x="3493.0" y="398.1" width="2.0" height="2.3" fill="#ffd700"/><rect x="3443.0" y="402.1" width="8.0" height="2.3" fill="#c586c0"/><rect x="3451.0" y="402.1" width="2.0" height="2.3" fill="#d4d4d4"/><rect x="3451.0" y="406.1" width="26.0" height="2.3" fill="#d4d4d4"/><rect x="3477.0" y="406.1" width="2.0" height="2.3" fill="#d4d4d4"/><rect x="3479.0" y="406.1" width="12.0" height="2.3" fill="#d4d4d4"/><rect x="3491.0" y="406.1" width="2.0" height="2.3" fill="#ffd700"/><rect x="3493.0" y="406.1" width="8.0" height="2.3" fill="#d4d4d4"/><rect x="3501.0" y="406.1" width="2.0" height="2.3" fill="#ffd700"/><rect x="3435.0" y="410.1" width="4.0" height="2.3" fill="#c586c0"/><rect x="3441.0" y="410.1" width="26.0" height="2.3" fill="#d4d4d4"/><rect x="3467.0" y="410.1" width="2.0" height="2.3" fill="#d4d4d4"/><rect x="3443.0" y="414.1" width="12.0" height="2.3" fill="#d4d4d4"/><rect x="3455.0" y="414.1" width="2.0" height="2.3" fill="#d4d4d4"/><rect x="3457.0" y="414.1" width="12.0" height="2.3" fill="#d4d4d4"/><rect x="3469.0" y="414.1" width="2.0" height="2.3" fill="#ffd700"/><rect x="3471.0" y="414.1" width="6.0" height="2.3" fill="#ce9178"/><rect x="3477.0" y="414.1" width="2.0" height="2.3" fill="#d4d4d4"/><rect x="3479.0" y="414.1" width="8.0" height="2.3" fill="#d4d4d4"/><rect x="3487.0" y="414.1" width="2.0" height="2.3" fill="#ffd700"/><rect x="3489.0" y="414.1" width="26.0" height="2.3" fill="#d4d4d4"/><rect x="3515.0" y="414.1" width="2.0" height="2.3" fill="#ffd700"/><rect x="3517.0" y="414.1" width="2.0" height="2.3" fill="#ffd700"/><rect x="3435.0" y="422.1" width="10.0" height="2.3" fill="#dcdcaa"/><rect x="3445.0" y="422.1" width="2.0" height="2.3" fill="#ffd700"/><rect x="3447.0" y="422.1" width="88.0" height="2.3" fill="#ce9178"/><rect x="3535.0" y="422.1" width="2.0" height="2.3" fill="#ffd700"/><rect x="3435.0" y="430.1" width="26.0" height="2.3" fill="#d4d4d4"/><rect x="3463.0" y="430.1" width="2.0" height="2.3" fill="#d4d4d4"/><rect x="3467.0" y="430.1" width="4.0" height="2.3" fill="#ce9178"/><rect x="3471.0" y="430.1" width="168.0" height="2.3" fill="#ce9178"/><rect x="3435.0" y="438.2" width="8.0" height="2.3" fill="#ce9178"/><rect x="3445.0" y="438.2" width="16.0" height="2.3" fill="#ce9178"/><rect x="3435.0" y="442.2" width="4.0" height="2.3" fill="#ce9178"/><rect x="3441.0" y="442.2" width="10.0" height="2.3" fill="#ce9178"/><rect x="3453.0" y="442.2" width="8.0" height="2.3" fill="#ce9178"/><rect x="3463.0" y="442.2" width="6.0" height="2.3" fill="#ce9178"/><rect x="3471.0" y="442.2" width="10.0" height="2.3" fill="#ce9178"/><rect x="3483.0" y="442.2" width="8.0" height="2.3" fill="#ce9178"/><rect x="3493.0" y="442.2" width="6.0" height="2.3" fill="#ce9178"/><rect x="3501.0" y="442.2" width="6.0" height="2.3" fill="#ce9178"/><rect x="3509.0" y="442.2" width="16.0" height="2.3" fill="#ce9178"/><rect x="3527.0" y="442.2" width="6.0" height="2.3" fill="#ce9178"/><rect x="3535.0" y="442.2" width="22.0" height="2.3" fill="#ce9178"/><rect x="3559.0" y="442.2" width="10.0" height="2.3" fill="#ce9178"/><rect x="3435.0" y="446.2" width="4.0" height="2.3" fill="#ce9178"/><rect x="3441.0" y="446.2" width="6.0" height="2.3" fill="#ce9178"/><rect x="3449.0" y="446.2" width="8.0" height="2.3" fill="#ce9178"/><rect x="3459.0" y="446.2" width="6.0" height="2.3" fill="#ce9178"/><rect x="3467.0" y="446.2" width="16.0" height="2.3" fill="#ce9178"/><rect x="3485.0" y="446.2" width="14.0" height="2.3" fill="#ce9178"/><rect x="3501.0" y="446.2" width="2.0" height="2.3" fill="#ce9178"/><rect x="3505.0" y="446.2" width="16.0" height="2.3" fill="#ce9178"/><rect x="3523.0" y="446.2" width="12.0" height="2.3" fill="#ce9178"/><rect x="3537.0" y="446.2" width="16.0" height="2.3" fill="#ce9178"/><rect x="3435.0" y="450.2" width="4.0" height="2.3" fill="#ce9178"/><rect x="3441.0" y="450.2" width="8.0" height="2.3" fill="#ce9178"/><rect x="3451.0" y="450.2" width="14.0" height="2.3" fill="#ce9178"/><rect x="3467.0" y="450.2" width="18.0" height="2.3" fill="#ce9178"/><rect x="3487.0" y="450.2" width="30.0" height="2.3" fill="#ce9178"/><rect x="3519.0" y="450.2" width="12.0" height="2.3" fill="#ce9178"/><rect x="3533.0" y="450.2" width="20.0" height="2.3" fill="#ce9178"/><rect x="3435.0" y="454.2" width="4.0" height="2.3" fill="#ce9178"/><rect x="3441.0" y="454.2" width="14.0" height="2.3" fill="#ce9178"/><rect x="3457.0" y="454.2" width="16.0" height="2.3" fill="#ce9178"/><rect x="3475.0" y="454.2" width="6.0" height="2.3" fill="#ce9178"/><rect x="3483.0" y="454.2" width="12.0" height="2.3" fill="#ce9178"/><rect x="3497.0" y="454.2" width="10.0" height="2.3" fill="#ce9178"/><rect x="3509.0" y="454.2" width="8.0" height="2.3" fill="#ce9178"/><rect x="3519.0" y="454.2" width="6.0" height="2.3" fill="#ce9178"/><rect x="3527.0" y="454.2" width="8.0" height="2.3" fill="#ce9178"/><rect x="3435.0" y="462.2" width="12.0" height="2.3" fill="#ce9178"/><rect x="3449.0" y="462.2" width="6.0" height="2.3" fill="#ce9178"/><rect x="3457.0" y="462.2" width="10.0" height="2.3" fill="#ce9178"/><rect x="3469.0" y="462.2" width="6.0" height="2.3" fill="#ce9178"/><rect x="3477.0" y="462.2" width="4.0" height="2.3" fill="#ce9178"/><rect x="3483.0" y="462.2" width="16.0" height="2.3" fill="#ce9178"/><rect x="3501.0" y="462.2" width="16.0" height="2.3" fill="#ce9178"/><rect x="3519.0" y="462.2" width="10.0" height="2.3" fill="#ce9178"/><rect x="3531.0" y="462.2" width="6.0" height="2.3" fill="#ce9178"/><rect x="3539.0" y="462.2" width="12.0" height="2.3" fill="#ce9178"/><rect x="3553.0" y="462.2" width="10.0" height="2.3" fill="#ce9178"/><rect x="3565.0" y="462.2" width="6.0" height="2.3" fill="#ce9178"/><rect x="3573.0" y="462.2" width="14.0" height="2.3" fill="#ce9178"/><rect x="3589.0" y="462.2" width="6.0" height="2.3" fill="#ce9178"/><rect x="3597.0" y="462.2" width="8.0" height="2.3" fill="#ce9178"/><rect x="3607.0" y="462.2" width="6.0" height="2.3" fill="#ce9178"/><rect x="3615.0" y="462.2" width="14.0" height="2.3" fill="#ce9178"/><rect x="3631.0" y="462.2" width="4.0" height="2.3" fill="#ce9178"/><rect x="3637.0" y="462.2" width="2.0" height="2.3" fill="#ce9178"/><rect x="3435.0" y="466.2" width="4.0" height="2.3" fill="#ce9178"/><rect x="3441.0" y="466.2" width="16.0" height="2.3" fill="#ce9178"/><rect x="3459.0" y="466.2" width="6.0" height="2.3" fill="#ce9178"/><rect x="3467.0" y="466.2" width="16.0" height="2.3" fill="#ce9178"/><rect x="3485.0" y="466.2" width="12.0" height="2.3" fill="#ce9178"/><rect x="3499.0" y="466.2" width="18.0" height="2.3" fill="#ce9178"/><rect x="3519.0" y="466.2" width="8.0" height="2.3" fill="#ce9178"/><rect x="3529.0" y="466.2" width="12.0" height="2.3" fill="#ce9178"/><rect x="3543.0" y="466.2" width="8.0" height="2.3" fill="#ce9178"/><rect x="3553.0" y="466.2" width="16.0" height="2.3" fill="#ce9178"/><rect x="3571.0" y="466.2" width="10.0" height="2.3" fill="#ce9178"/><rect x="3583.0" y="466.2" width="16.0" height="2.3" fill="#ce9178"/><rect x="3601.0" y="466.2" width="4.0" height="2.3" fill="#ce9178"/><rect x="3607.0" y="466.2" width="14.0" height="2.3" fill="#ce9178"/><rect x="3623.0" y="466.2" width="4.0" height="2.3" fill="#ce9178"/><rect x="3629.0" y="466.2" width="8.0" height="2.3" fill="#ce9178"/><rect x="3435.0" y="474.2" width="6.0" height="2.3" fill="#c586c0"/><rect x="3443.0" y="474.2" width="26.0" height="2.3" fill="#d4d4d4"/><rect x="3469.0" y="474.2" width="2.0" height="2.3" fill="#ffd700"/><rect x="3471.0" y="474.2" width="10.0" height="2.3" fill="#d4d4d4"/><rect x="3481.0" y="474.2" width="2.0" height="2.3" fill="#d4d4d4"/><rect x="3485.0" y="474.2" width="12.0" height="2.3" fill="#d4d4d4"/><rect x="3497.0" y="474.2" width="2.0" height="2.3" fill="#ffd700"/><rect x="3499.0" y="474.2" width="2.0" height="2.3" fill="#d4d4d4"/><rect x="3443.0" y="478.2" width="10.0" height="2.3" fill="#d4d4d4"/><rect x="3455.0" y="478.2" width="2.0" height="2.3" fill="#d4d4d4"/><rect x="3459.0" y="478.2" width="2.0" height="2.3" fill="#ffd700"/><rect x="3461.0" y="478.2" width="2.0" height="2.3" fill="#ffd700"/><rect x="3463.0" y="478.2" width="12.0" height="2.3" fill="#ce9178"/><rect x="3475.0" y="478.2" width="2.0" height="2.3" fill="#d4d4d4"/><rect x="3479.0" y="478.2" width="20.0" height="2.3" fill="#ce9178"/><rect x="3499.0" y="478.2" width="2.0" height="2.3" fill="#d4d4d4"/><rect x="3503.0" y="478.2" width="20.0" height="2.3" fill="#ce9178"/><rect x="3523.0" y="478.2" width="2.0" height="2.3" fill="#d4d4d4"/><rect x="3527.0" y="478.2" width="2.0" height="2.3" fill="#ffd700"/><rect x="3529.0" y="478.2" width="12.0" height="2.3" fill="#ce9178"/><rect x="3541.0" y="478.2" width="2.0" height="2.3" fill="#d4d4d4"/><rect x="3545.0" y="478.2" width="16.0" height="2.3" fill="#ce9178"/><rect x="3561.0" y="478.2" width="2.0" height="2.3" fill="#d4d4d4"/><rect x="3565.0" y="478.2" width="24.0" height="2.3" fill="#ce9178"/><rect x="3589.0" y="478.2" width="2.0" height="2.3" fill="#d4d4d4"/><rect x="3593.0" y="478.2" width="2.0" height="2.3" fill="#ffd700"/><rect x="3595.0" y="478.2" width="14.0" height="2.3" fill="#ce9178"/><rect x="3609.0" y="478.2" width="2.0" height="2.3" fill="#d4d4d4"/><rect x="3613.0" y="478.2" width="16.0" height="2.3" fill="#ce9178"/><rect x="3629.0" y="478.2" width="2.0" height="2.3" fill="#ffd700"/><rect x="3631.0" y="478.2" width="2.0" height="2.3" fill="#ffd700"/><rect x="3633.0" y="478.2" width="2.0" height="2.3" fill="#ffd700"/><rect x="3635.0" y="478.2" width="2.0" height="2.3" fill="#ffd700"/><rect x="3443.0" y="486.2" width="16.0" height="2.3" fill="#d4d4d4"/><rect x="3461.0" y="486.2" width="2.0" height="2.3" fill="#d4d4d4"/><rect x="3465.0" y="486.2" width="2.0" height="2.3" fill="#ffd700"/><rect x="3451.0" y="490.2" width="2.0" height="2.3" fill="#ffd700"/><rect x="3453.0" y="490.2" width="12.0" height="2.3" fill="#ce9178"/><rect x="3465.0" y="490.2" width="2.0" height="2.3" fill="#d4d4d4"/><rect x="3469.0" y="490.2" width="16.0" height="2.3" fill="#ce9178"/><rect x="3485.0" y="490.2" width="2.0" height="2.3" fill="#d4d4d4"/><rect x="3489.0" y="490.2" width="18.0" height="2.3" fill="#ce9178"/><rect x="3507.0" y="490.2" width="2.0" height="2.3" fill="#d4d4d4"/><rect x="3511.0" y="490.2" width="26.0" height="2.3" fill="#d4d4d4"/><rect x="3537.0" y="490.2" width="2.0" height="2.3" fill="#ffd700"/><rect x="3539.0" y="490.2" width="2.0" height="2.3" fill="#d4d4d4"/><rect x="3451.0" y="494.3" width="2.0" height="2.3" fill="#ffd700"/><rect x="3453.0" y="494.3" width="12.0" height="2.3" fill="#ce9178"/><rect x="3465.0" y="494.3" width="2.0" height="2.3" fill="#d4d4d4"/><rect x="3469.0" y="494.3" width="12.0" height="2.3" fill="#ce9178"/><rect x="3481.0" y="494.3" width="2.0" height="2.3" fill="#d4d4d4"/><rect x="3485.0" y="494.3" width="18.0" height="2.3" fill="#ce9178"/><rect x="3503.0" y="494.3" width="2.0" height="2.3" fill="#d4d4d4"/><rect x="3507.0" y="494.3" width="118.0" height="2.3" fill="#ce9178"/><rect x="3625.0" y="494.3" width="2.0" height="2.3" fill="#ffd700"/><rect x="3627.0" y="494.3" width="2.0" height="2.3" fill="#d4d4d4"/><rect x="3443.0" y="498.3" width="2.0" height="2.3" fill="#ffd700"/><rect x="3443.0" y="506.3" width="12.0" height="2.3" fill="#d4d4d4"/><rect x="3457.0" y="506.3" width="2.0" height="2.3" fill="#d4d4d4"/><rect x="3461.0" y="506.3" width="18.0" height="2.3" fill="#d4d4d4"/><rect x="3479.0" y="506.3" width="2.0" height="2.3" fill="#d4d4d4"/><rect x="3481.0" y="506.3" width="38.0" height="2.3" fill="#d4d4d4"/><rect x="3519.0" y="506.3" width="2.0" height="2.3" fill="#ffd700"/><rect x="3451.0" y="510.3" width="16.0" height="2.3" fill="#d4d4d4"/><rect x="3467.0" y="510.3" width="2.0" height="2.3" fill="#d4d4d4"/><rect x="3451.0" y="514.3" width="10.0" height="2.3" fill="#9cdcfe"/><rect x="3461.0" y="514.3" width="2.0" height="2.3" fill="#d4d4d4"/><rect x="3463.0" y="514.3" width="10.0" height="2.3" fill="#d4d4d4"/><rect x="3473.0" y="514.3" width="2.0" height="2.3" fill="#d4d4d4"/><rect x="3451.0" y="518.3" width="42.0" height="2.3" fill="#9cdcfe"/><rect x="3493.0" y="518.3" width="2.0" height="2.3" fill="#d4d4d4"/><rect x="3495.0" y="518.3" width="8.0" height="2.3" fill="#569cd6"/><rect x="3503.0" y="518.3" width="2.0" height="2.3" fill="#d4d4d4"/><rect x="3443.0" y="522.3" width="2.0" height="2.3" fill="#ffd700"/><rect x="3443.0" y="530.3" width="12.0" height="2.3" fill="#d4d4d4"/><rect x="3457.0" y="530.3" width="2.0" height="2.3" fill="#d4d4d4"/><rect x="3461.0" y="530.3" width="18.0" height="2.3" fill="#d4d4d4"/><rect x="3479.0" y="530.3" width="2.0" height="2.3" fill="#ffd700"/><rect x="3481.0" y="530.3" width="12.0" height="2.3" fill="#d4d4d4"/><rect x="3493.0" y="530.3" width="2.0" height="2.3" fill="#d4d4d4"/><rect x="3497.0" y="530.3" width="28.0" height="2.3" fill="#9cdcfe"/><rect x="3525.0" y="530.3" width="2.0" height="2.3" fill="#d4d4d4"/><rect x="3527.0" y="530.3" width="8.0" height="2.3" fill="#ce9178"/><rect x="3535.0" y="530.3" width="2.0" height="2.3" fill="#ffd700"/><rect x="3537.0" y="530.3" width="2.0" height="2.3" fill="#d4d4d4"/><rect x="3539.0" y="530.3" width="4.0" height="2.3" fill="#d4d4d4"/><rect x="3543.0" y="530.3" width="2.0" height="2.3" fill="#ffd700"/><rect x="3545.0" y="530.3" width="10.0" height="2.3" fill="#d4d4d4"/><rect x="3555.0" y="530.3" width="2.0" height="2.3" fill="#d4d4d4"/><rect x="3557.0" y="530.3" width="12.0" height="2.3" fill="#d4d4d4"/><rect x="3569.0" y="530.3" width="2.0" height="2.3" fill="#ffd700"/><rect x="3443.0" y="538.3" width="8.0" height="2.3" fill="#c586c0"/><rect x="3453.0" y="538.3" width="10.0" height="2.3" fill="#d4d4d4"/><rect x="3463.0" y="538.3" width="2.0" height="2.3" fill="#d4d4d4"/><rect x="3465.0" y="538.3" width="14.0" height="2.3" fill="#d4d4d4"/><rect x="3479.0" y="538.3" width="2.0" height="2.3" fill="#ffd700"/><rect x="3481.0" y="538.3" width="2.0" height="2.3" fill="#ffd700"/><rect x="3483.0" y="538.3" width="2.0" height="2.3" fill="#d4d4d4"/><rect x="3487.0" y="538.3" width="12.0" height="2.3" fill="#d4d4d4"/><rect x="3501.0" y="538.3" width="2.0" height="2.3" fill="#d4d4d4"/><rect x="3505.0" y="538.3" width="10.0" height="2.3" fill="#d4d4d4"/><rect x="3515.0" y="538.3" width="2.0" height="2.3" fill="#d4d4d4"/><rect x="3517.0" y="538.3" width="16.0" height="2.3" fill="#d4d4d4"/><rect x="3533.0" y="538.3" width="2.0" height="2.3" fill="#ffd700"/><rect x="3451.0" y="542.3" width="2.0" height="2.3" fill="#d4d4d4"/><rect x="3453.0" y="542.3" width="2.0" height="2.3" fill="#d4d4d4"/><rect x="3455.0" y="542.3" width="12.0" height="2.3" fill="#d4d4d4"/><rect x="3467.0" y="542.3" width="2.0" height="2.3" fill="#d4d4d4"/><rect x="3459.0" y="546.3" width="28.0" height="2.3" fill="#9cdcfe"/><rect x="3487.0" y="546.3" width="2.0" height="2.3" fill="#d4d4d4"/><rect x="3489.0" y="546.3" width="8.0" height="2.3" fill="#b5cea8"/><rect x="3497.0" y="546.3" width="2.0" height="2.3" fill="#d4d4d4"/><rect x="3459.0" y="550.4" width="18.0" height="2.3" fill="#9cdcfe"/><rect x="3477.0" y="550.4" width="2.0" height="2.3" fill="#d4d4d4"/><rect x="3479.0" y="550.4" width="10.0" height="2.3" fill="#569cd6"/><rect x="3489.0" y="550.4" width="2.0" height="2.3" fill="#d4d4d4"/><rect x="3459.0" y="554.4" width="22.0" height="2.3" fill="#9cdcfe"/><rect x="3481.0" y="554.4" width="2.0" height="2.3" fill="#d4d4d4"/><rect x="3483.0" y="554.4" width="8.0" height="2.3" fill="#569cd6"/><rect x="3491.0" y="554.4" width="2.0" height="2.3" fill="#d4d4d4"/><rect x="3459.0" y="558.4" width="24.0" height="2.3" fill="#9cdcfe"/><rect x="3483.0" y="558.4" width="2.0" height="2.3" fill="#d4d4d4"/><rect x="3485.0" y="558.4" width="18.0" height="2.3" fill="#d4d4d4"/><rect x="3503.0" y="558.4" width="2.0" height="2.3" fill="#d4d4d4"/><rect x="3505.0" y="558.4" width="24.0" height="2.3" fill="#d4d4d4"/><rect x="3529.0" y="558.4" width="2.0" height="2.3" fill="#d4d4d4"/><rect x="3451.0" y="562.4" width="2.0" height="2.3" fill="#ffd700"/><rect x="3443.0" y="570.4" width="16.0" height="2.3" fill="#d4d4d4"/><rect x="3461.0" y="570.4" width="2.0" height="2.3" fill="#d4d4d4"/><rect x="3465.0" y="570.4" width="18.0" height="2.3" fill="#d4d4d4"/><rect x="3483.0" y="570.4" width="2.0" height="2.3" fill="#d4d4d4"/><rect x="3485.0" y="570.4" width="12.0" height="2.3" fill="#d4d4d4"/><rect x="3497.0" y="570.4" width="2.0" height="2.3" fill="#ffd700"/><rect x="3499.0" y="570.4" width="12.0" height="2.3" fill="#d4d4d4"/><rect x="3511.0" y="570.4" width="2.0" height="2.3" fill="#ffd700"/><rect x="3513.0" y="570.4" width="2.0" height="2.3" fill="#b5cea8"/><rect x="3515.0" y="570.4" width="2.0" height="2.3" fill="#ffd700"/><rect x="3517.0" y="570.4" width="2.0" height="2.3" fill="#ffd700"/><rect x="3519.0" y="570.4" width="12.0" height="2.3" fill="#d4d4d4"/><rect x="3531.0" y="570.4" width="2.0" height="2.3" fill="#ffd700"/><rect x="3533.0" y="570.4" width="22.0" height="2.3" fill="#ce9178"/><rect x="3555.0" y="570.4" width="2.0" height="2.3" fill="#ffd700"/><rect x="3557.0" y="570.4" width="2.0" height="2.3" fill="#d4d4d4"/><rect x="3559.0" y="570.4" width="10.0" height="2.3" fill="#d4d4d4"/><rect x="3569.0" y="570.4" width="2.0" height="2.3" fill="#ffd700"/><rect x="3571.0" y="570.4" width="2.0" height="2.3" fill="#d4d4d4"/><rect x="3573.0" y="570.4" width="2.0" height="2.3" fill="#b5cea8"/><rect x="3575.0" y="570.4" width="2.0" height="2.3" fill="#ffd700"/><rect x="3577.0" y="570.4" width="2.0" height="2.3" fill="#d4d4d4"/><rect x="3579.0" y="570.4" width="2.0" height="2.3" fill="#ffd700"/><rect x="3581.0" y="570.4" width="2.0" height="2.3" fill="#d4d4d4"/><rect x="3585.0" y="570.4" width="38.0" height="2.3" fill="#9cdcfe"/><rect x="3623.0" y="570.4" width="2.0" height="2.3" fill="#d4d4d4"/><rect x="3625.0" y="570.4" width="8.0" height="2.3" fill="#569cd6"/><rect x="3633.0" y="570.4" width="2.0" height="2.3" fill="#ffd700"/><rect x="3443.0" y="574.4" width="12.0" height="2.3" fill="#c586c0"/><rect x="3457.0" y="574.4" width="16.0" height="2.3" fill="#d4d4d4"/><rect x="3435.0" y="582.4" width="6.0" height="2.3" fill="#c586c0"/><rect x="3443.0" y="582.4" width="2.0" height="2.3" fill="#d4d4d4"/><rect x="3445.0" y="582.4" width="2.0" height="2.3" fill="#d4d4d4"/><rect x="3449.0" y="582.4" width="10.0" height="2.3" fill="#d4d4d4"/><rect x="3461.0" y="582.4" width="4.0" height="2.3" fill="#c586c0"/><rect x="3467.0" y="582.4" width="18.0" height="2.3" fill="#dcdcaa"/><rect x="3485.0" y="582.4" width="2.0" height="2.3" fill="#ffd700"/><rect x="3487.0" y="582.4" width="12.0" height="2.3" fill="#d4d4d4"/><rect x="3499.0" y="582.4" width="2.0" height="2.3" fill="#ffd700"/><rect x="3501.0" y="582.4" width="2.0" height="2.3" fill="#d4d4d4"/><rect x="3505.0" y="582.4" width="14.0" height="2.3" fill="#d4d4d4"/><rect x="3519.0" y="582.4" width="2.0" height="2.3" fill="#d4d4d4"/><rect x="3521.0" y="582.4" width="12.0" height="2.3" fill="#d4d4d4"/><rect x="3533.0" y="582.4" width="2.0" height="2.3" fill="#ffd700"/><rect x="3535.0" y="582.4" width="2.0" height="2.3" fill="#ffd700"/><rect x="3443.0" y="586.4" width="8.0" height="2.3" fill="#ce9178"/><rect x="3451.0" y="586.4" width="2.0" height="2.3" fill="#d4d4d4"/><rect x="3455.0" y="586.4" width="2.0" height="2.3" fill="#d4d4d4"/><rect x="3457.0" y="586.4" width="2.0" height="2.3" fill="#d4d4d4"/><rect x="3461.0" y="586.4" width="12.0" height="2.3" fill="#ce9178"/><rect x="3473.0" y="586.4" width="2.0" height="2.3" fill="#d4d4d4"/><rect x="3477.0" y="586.4" width="10.0" height="2.3" fill="#d4d4d4"/><rect x="3487.0" y="586.4" width="2.0" height="2.3" fill="#ffd700"/><rect x="3489.0" y="586.4" width="2.0" height="2.3" fill="#d4d4d4"/><rect x="3491.0" y="586.4" width="6.0" height="2.3" fill="#b5cea8"/><rect x="3497.0" y="586.4" width="2.0" height="2.3" fill="#ffd700"/><rect x="3499.0" y="586.4" width="2.0" height="2.3" fill="#d4d4d4"/><rect x="3503.0" y="586.4" width="14.0" height="2.3" fill="#ce9178"/><rect x="3517.0" y="586.4" width="2.0" height="2.3" fill="#d4d4d4"/><rect x="3521.0" y="586.4" width="8.0" height="2.3" fill="#569cd6"/><rect x="3529.0" y="586.4" width="2.0" height="2.3" fill="#d4d4d4"/><rect x="3443.0" y="590.4" width="4.0" height="2.3" fill="#c586c0"/><rect x="3449.0" y="590.4" width="16.0" height="2.3" fill="#ce9178"/><rect x="3467.0" y="590.4" width="4.0" height="2.3" fill="#c586c0"/><rect x="3473.0" y="590.4" width="16.0" height="2.3" fill="#d4d4d4"/><rect x="3489.0" y="590.4" width="2.0" height="2.3" fill="#d4d4d4"/><rect x="3493.0" y="590.4" width="8.0" height="2.3" fill="#d4d4d4"/><rect x="3503.0" y="590.4" width="2.0" height="2.3" fill="#d4d4d4"/><rect x="3507.0" y="590.4" width="10.0" height="2.3" fill="#d4d4d4"/><rect x="3517.0" y="590.4" width="2.0" height="2.3" fill="#ffd700"/><rect x="3451.0" y="594.4" width="16.0" height="2.3" fill="#d4d4d4"/><rect x="3467.0" y="594.4" width="2.0" height="2.3" fill="#d4d4d4"/><rect x="3451.0" y="598.4" width="8.0" height="2.3" fill="#9cdcfe"/><rect x="3459.0" y="598.4" width="2.0" height="2.3" fill="#d4d4d4"/><rect x="3461.0" y="598.4" width="16.0" height="2.3" fill="#ce9178"/><rect x="3477.0" y="598.4" width="2.0" height="2.3" fill="#d4d4d4"/><rect x="3481.0" y="598.4" width="10.0" height="2.3" fill="#9cdcfe"/><rect x="3491.0" y="598.4" width="2.0" height="2.3" fill="#d4d4d4"/><rect x="3493.0" y="598.4" width="18.0" height="2.3" fill="#ce9178"/><rect x="3511.0" y="598.4" width="2.0" height="2.3" fill="#d4d4d4"/><rect x="3515.0" y="598.4" width="10.0" height="2.3" fill="#9cdcfe"/><rect x="3525.0" y="598.4" width="2.0" height="2.3" fill="#d4d4d4"/><rect x="3527.0" y="598.4" width="4.0" height="2.3" fill="#b5cea8"/><rect x="3531.0" y="598.4" width="2.0" height="2.3" fill="#d4d4d4"/><rect x="3535.0" y="598.4" width="12.0" height="2.3" fill="#9cdcfe"/><rect x="3547.0" y="598.4" width="2.0" height="2.3" fill="#d4d4d4"/><rect x="3549.0" y="598.4" width="10.0" height="2.3" fill="#569cd6"/><rect x="3559.0" y="598.4" width="2.0" height="2.3" fill="#d4d4d4"/><rect x="3563.0" y="598.4" width="76.0" height="2.3" fill="#ce9178"/><rect x="3451.0" y="602.4" width="2.0" height="2.3" fill="#ffd700"/><rect x="3459.0" y="606.5" width="6.0" height="2.3" fill="#c586c0"/><rect x="3467.0" y="606.5" width="2.0" height="2.3" fill="#d4d4d4"/><rect x="3471.0" y="606.5" width="4.0" height="2.3" fill="#c586c0"/><rect x="3477.0" y="606.5" width="8.0" height="2.3" fill="#d4d4d4"/><rect x="3485.0" y="606.5" width="2.0" height="2.3" fill="#d4d4d4"/><rect x="3467.0" y="610.5" width="10.0" height="2.3" fill="#dcdcaa"/><rect x="3477.0" y="610.5" width="2.0" height="2.3" fill="#ffd700"/><rect x="3479.0" y="610.5" width="2.0" height="2.3" fill="#d4d4d4"/><rect x="3481.0" y="610.5" width="2.0" height="2.3" fill="#ffd700"/><rect x="3475.0" y="614.5" width="10.0" height="2.3" fill="#d4d4d4"/><rect x="3485.0" y="614.5" width="2.0" height="2.3" fill="#d4d4d4"/><rect x="3487.0" y="614.5" width="12.0" height="2.3" fill="#d4d4d4"/><rect x="3499.0" y="614.5" width="2.0" height="2.3" fill="#ffd700"/><rect x="3501.0" y="614.5" width="2.0" height="2.3" fill="#d4d4d4"/><rect x="3503.0" y="614.5" width="2.0" height="2.3" fill="#ffd700"/><rect x="3505.0" y="614.5" width="8.0" height="2.3" fill="#ce9178"/><rect x="3513.0" y="614.5" width="2.0" height="2.3" fill="#ffd700"/><rect x="3515.0" y="614.5" width="2.0" height="2.3" fill="#ffd700"/><rect x="3519.0" y="614.5" width="2.0" height="2.3" fill="#d4d4d4"/><rect x="3523.0" y="614.5" width="14.0" height="2.3" fill="#d4d4d4"/><rect x="3539.0" y="614.5" width="6.0" height="2.3" fill="#d4d4d4"/><rect x="3547.0" y="614.5" width="6.0" height="2.3" fill="#d4d4d4"/><rect x="3555.0" y="614.5" width="4.0" height="2.3" fill="#d4d4d4"/><rect x="3561.0" y="614.5" width="6.0" height="2.3" fill="#d4d4d4"/><rect x="3569.0" y="614.5" width="16.0" height="2.3" fill="#d4d4d4"/><rect x="3587.0" y="614.5" width="8.0" height="2.3" fill="#d4d4d4"/><rect x="3597.0" y="614.5" width="14.0" height="2.3" fill="#d4d4d4"/><rect x="3613.0" y="614.5" width="6.0" height="2.3" fill="#d4d4d4"/><rect x="3621.0" y="614.5" width="10.0" height="2.3" fill="#d4d4d4"/><rect x="3633.0" y="614.5" width="6.0" height="2.3" fill="#d4d4d4"/><rect x="3467.0" y="618.5" width="2.0" height="2.3" fill="#ffd700"/><rect x="3459.0" y="622.5" width="2.0" height="2.3" fill="#ffd700"/><rect x="3451.0" y="626.5" width="2.0" height="2.3" fill="#ffd700"/><rect x="3443.0" y="630.5" width="12.0" height="2.3" fill="#c586c0"/><rect x="3457.0" y="630.5" width="10.0" height="2.3" fill="#d4d4d4"/><rect x="3435.0" y="638.5" width="10.0" height="2.3" fill="#d4d4d4"/><rect x="3447.0" y="638.5" width="2.0" height="2.3" fill="#d4d4d4"/><rect x="3451.0" y="638.5" width="188.0" height="2.3" fill="#ce9178"/><rect x="3435.0" y="646.5" width="10.0" height="2.3" fill="#d4d4d4"/><rect x="3447.0" y="646.5" width="2.0" height="2.3" fill="#d4d4d4"/><rect x="3451.0" y="646.5" width="26.0" height="2.3" fill="#d4d4d4"/><rect x="3477.0" y="646.5" width="2.0" height="2.3" fill="#ffd700"/><rect x="3479.0" y="646.5" width="10.0" height="2.3" fill="#d4d4d4"/><rect x="3489.0" y="646.5" width="2.0" height="2.3" fill="#d4d4d4"/><rect x="3443.0" y="650.5" width="12.0" height="2.3" fill="#d4d4d4"/><rect x="3455.0" y="650.5" width="2.0" height="2.3" fill="#ffd700"/><rect x="3435.0" y="654.5" width="10.0" height="2.3" fill="#dcdcaa"/><rect x="3445.0" y="654.5" width="2.0" height="2.3" fill="#ffd700"/><rect x="3447.0" y="654.5" width="10.0" height="2.3" fill="#d4d4d4"/><rect x="3457.0" y="654.5" width="2.0" height="2.3" fill="#ffd700"/><rect x="3435.0" y="662.6" width="8.0" height="2.3" fill="#c586c0"/><rect x="3445.0" y="662.6" width="8.0" height="2.3" fill="#dcdcaa"/><rect x="3453.0" y="662.6" width="2.0" height="2.3" fill="#ffd700"/><rect x="3455.0" y="662.6" width="22.0" height="2.3" fill="#d4d4d4"/><rect x="3477.0" y="662.6" width="2.0" height="2.3" fill="#d4d4d4"/><rect x="3481.0" y="662.6" width="6.0" height="2.3" fill="#ce9178"/><rect x="3487.0" y="662.6" width="2.0" height="2.3" fill="#ffd700"/><rect x="3491.0" y="662.6" width="4.0" height="2.3" fill="#c586c0"/><rect x="3497.0" y="662.6" width="6.0" height="2.3" fill="#d4d4d4"/><rect x="3503.0" y="662.6" width="2.0" height="2.3" fill="#d4d4d4"/><rect x="3507.0" y="662.6" width="8.0" height="2.3" fill="#d4d4d4"/><rect x="3515.0" y="662.6" width="2.0" height="2.3" fill="#d4d4d4"/><rect x="3517.0" y="662.6" width="8.0" height="2.3" fill="#d4d4d4"/><rect x="3525.0" y="662.6" width="2.0" height="2.3" fill="#ffd700"/><rect x="3527.0" y="662.6" width="2.0" height="2.3" fill="#ffd700"/><rect x="3529.0" y="662.6" width="14.0" height="2.3" fill="#ce9178"/><rect x="3543.0" y="662.6" width="2.0" height="2.3" fill="#d4d4d4"/><rect x="3547.0" y="662.6" width="10.0" height="2.3" fill="#d4d4d4"/><rect x="3557.0" y="662.6" width="2.0" height="2.3" fill="#d4d4d4"/><rect x="3443.0" y="666.6" width="14.0" height="2.3" fill="#ce9178"/><rect x="3457.0" y="666.6" width="2.0" height="2.3" fill="#d4d4d4"/><rect x="3461.0" y="666.6" width="10.0" height="2.3" fill="#d4d4d4"/><rect x="3471.0" y="666.6" width="2.0" height="2.3" fill="#ffd700"/><rect x="3473.0" y="666.6" width="2.0" height="2.3" fill="#d4d4d4"/><rect x="3477.0" y="666.6" width="6.0" height="2.3" fill="#d4d4d4"/><rect x="3483.0" y="666.6" width="2.0" height="2.3" fill="#d4d4d4"/><rect x="3487.0" y="666.6" width="12.0" height="2.3" fill="#9cdcfe"/><rect x="3499.0" y="666.6" width="2.0" height="2.3" fill="#d4d4d4"/><rect x="3501.0" y="666.6" width="2.0" height="2.3" fill="#b5cea8"/><rect x="3503.0" y="666.6" width="2.0" height="2.3" fill="#ffd700"/><rect x="3435.0" y="670.6" width="10.0" height="2.3" fill="#dcdcaa"/><rect x="3445.0" y="670.6" width="2.0" height="2.3" fill="#ffd700"/><rect x="3447.0" y="670.6" width="16.0" height="2.3" fill="#ce9178"/><rect x="3463.0" y="670.6" width="2.0" height="2.3" fill="#ffd700"/><rect x="3435.0" y="678.6" width="6.0" height="2.3" fill="#c586c0"/><rect x="3443.0" y="678.6" width="6.0" height="2.3" fill="#d4d4d4"/><rect x="3451.0" y="678.6" width="4.0" height="2.3" fill="#c586c0"/><rect x="3457.0" y="678.6" width="10.0" height="2.3" fill="#d4d4d4"/><rect x="3467.0" y="678.6" width="2.0" height="2.3" fill="#d4d4d4"/><rect x="3471.0" y="678.6" width="10.0" height="2.3" fill="#dcdcaa"/><rect x="3481.0" y="678.6" width="2.0" height="2.3" fill="#ffd700"/><rect x="3483.0" y="678.6" width="48.0" height="2.3" fill="#ce9178"/><rect x="3531.0" y="678.6" width="2.0" height="2.3" fill="#ffd700"/><rect x="3443.0" y="682.6" width="10.0" height="2.3" fill="#dcdcaa"/><rect x="3453.0" y="682.6" width="2.0" height="2.3" fill="#ffd700"/><rect x="3455.0" y="682.6" width="12.0" height="2.3" fill="#d4d4d4"/><rect x="3467.0" y="682.6" width="2.0" height="2.3" fill="#ffd700"/><rect x="3469.0" y="682.6" width="6.0" height="2.3" fill="#d4d4d4"/><rect x="3475.0" y="682.6" width="2.0" height="2.3" fill="#ffd700"/><rect x="3477.0" y="682.6" width="2.0" height="2.3" fill="#ffd700"/><rect x="3443.0" y="686.6" width="10.0" height="2.3" fill="#dcdcaa"/><rect x="3453.0" y="686.6" width="2.0" height="2.3" fill="#ffd700"/><rect x="3455.0" y="686.6" width="2.0" height="2.3" fill="#ffd700"/><rect x="3435.0" y="694.6" width="14.0" height="2.3" fill="#d4d4d4"/><rect x="3451.0" y="694.6" width="2.0" height="2.3" fill="#d4d4d4"/><rect x="3455.0" y="694.6" width="18.0" height="2.3" fill="#d4d4d4"/><rect x="3473.0" y="694.6" width="2.0" height="2.3" fill="#d4d4d4"/><rect x="3475.0" y="694.6" width="12.0" height="2.3" fill="#d4d4d4"/><rect x="3487.0" y="694.6" width="2.0" height="2.3" fill="#ffd700"/><rect x="3489.0" y="694.6" width="10.0" height="2.3" fill="#d4d4d4"/><rect x="3499.0" y="694.6" width="2.0" height="2.3" fill="#d4d4d4"/><rect x="3501.0" y="694.6" width="16.0" height="2.3" fill="#d4d4d4"/><rect x="3517.0" y="694.6" width="2.0" height="2.3" fill="#ffd700"/><rect x="3519.0" y="694.6" width="2.0" height="2.3" fill="#d4d4d4"/><rect x="3521.0" y="694.6" width="2.0" height="2.3" fill="#d4d4d4"/><rect x="3523.0" y="694.6" width="12.0" height="2.3" fill="#d4d4d4"/><rect x="3535.0" y="694.6" width="2.0" height="2.3" fill="#ffd700"/><rect x="3537.0" y="694.6" width="2.0" height="2.3" fill="#d4d4d4"/><rect x="3541.0" y="694.6" width="38.0" height="2.3" fill="#9cdcfe"/><rect x="3579.0" y="694.6" width="2.0" height="2.3" fill="#d4d4d4"/><rect x="3581.0" y="694.6" width="8.0" height="2.3" fill="#569cd6"/><rect x="3589.0" y="694.6" width="2.0" height="2.3" fill="#ffd700"/><rect x="3435.0" y="702.6" width="6.0" height="2.3" fill="#c586c0"/><rect x="3443.0" y="702.6" width="8.0" height="2.3" fill="#d4d4d4"/><rect x="3451.0" y="702.6" width="2.0" height="2.3" fill="#ffd700"/><rect x="3453.0" y="702.6" width="2.0" height="2.3" fill="#ffd700"/><rect x="3455.0" y="702.6" width="2.0" height="2.3" fill="#d4d4d4"/><rect x="3443.0" y="706.6" width="10.0" height="2.3" fill="#d4d4d4"/><rect x="3455.0" y="706.6" width="2.0" height="2.3" fill="#d4d4d4"/><rect x="3459.0" y="706.6" width="10.0" height="2.3" fill="#dcdcaa"/><rect x="3469.0" y="706.6" width="2.0" height="2.3" fill="#ffd700"/><rect x="3471.0" y="706.6" width="18.0" height="2.3" fill="#ce9178"/><rect x="3489.0" y="706.6" width="2.0" height="2.3" fill="#ffd700"/><rect x="3451.0" y="710.6" width="12.0" height="2.3" fill="#d4d4d4"/><rect x="3465.0" y="710.6" width="2.0" height="2.3" fill="#d4d4d4"/><rect x="3469.0" y="710.6" width="26.0" height="2.3" fill="#d4d4d4"/><rect x="3495.0" y="710.6" width="2.0" height="2.3" fill="#ffd700"/><rect x="3497.0" y="710.6" width="10.0" height="2.3" fill="#d4d4d4"/><rect x="3507.0" y="710.6" width="2.0" height="2.3" fill="#d4d4d4"/><rect x="3511.0" y="710.6" width="12.0" height="2.3" fill="#d4d4d4"/><rect x="3523.0" y="710.6" width="2.0" height="2.3" fill="#ffd700"/><rect x="3451.0" y="714.6" width="10.0" height="2.3" fill="#dcdcaa"/><rect x="3461.0" y="714.6" width="2.0" height="2.3" fill="#ffd700"/><rect x="3463.0" y="714.6" width="12.0" height="2.3" fill="#d4d4d4"/><rect x="3475.0" y="714.6" width="2.0" height="2.3" fill="#ffd700"/><rect x="3435.0" y="722.7" width="6.0" height="2.3" fill="#c586c0"/><rect x="3443.0" y="722.7" width="16.0" height="2.3" fill="#d4d4d4"/><rect x="3459.0" y="722.7" width="2.0" height="2.3" fill="#ffd700"/><rect x="3461.0" y="722.7" width="10.0" height="2.3" fill="#d4d4d4"/><rect x="3471.0" y="722.7" width="2.0" height="2.3" fill="#d4d4d4"/><rect x="3475.0" y="722.7" width="16.0" height="2.3" fill="#d4d4d4"/><rect x="3491.0" y="722.7" width="2.0" height="2.3" fill="#ffd700"/><rect x="3493.0" y="722.7" width="2.0" height="2.3" fill="#d4d4d4"/><rect x="3443.0" y="726.7" width="8.0" height="2.3" fill="#d4d4d4"/><rect x="3453.0" y="726.7" width="2.0" height="2.3" fill="#d4d4d4"/><rect x="3457.0" y="726.7" width="6.0" height="2.3" fill="#dcdcaa"/><rect x="3463.0" y="726.7" width="2.0" height="2.3" fill="#ffd700"/><rect x="3465.0" y="726.7" width="6.0" height="2.3" fill="#d4d4d4"/><rect x="3471.0" y="726.7" width="2.0" height="2.3" fill="#ffd700"/><rect x="3473.0" y="726.7" width="10.0" height="2.3" fill="#d4d4d4"/><rect x="3483.0" y="726.7" width="2.0" height="2.3" fill="#ffd700"/><rect x="3487.0" y="726.7" width="2.0" height="2.3" fill="#d4d4d4"/><rect x="3491.0" y="726.7" width="6.0" height="2.3" fill="#d4d4d4"/><rect x="3497.0" y="726.7" width="2.0" height="2.3" fill="#ffd700"/><rect x="3499.0" y="726.7" width="16.0" height="2.3" fill="#d4d4d4"/><rect x="3515.0" y="726.7" width="2.0" height="2.3" fill="#ffd700"/><rect x="3517.0" y="726.7" width="2.0" height="2.3" fill="#ffd700"/><rect x="3443.0" y="730.7" width="18.0" height="2.3" fill="#d4d4d4"/><rect x="3463.0" y="730.7" width="2.0" height="2.3" fill="#d4d4d4"/><rect x="3467.0" y="730.7" width="8.0" height="2.3" fill="#d4d4d4"/><rect x="3477.0" y="730.7" width="2.0" height="2.3" fill="#d4d4d4"/><rect x="3481.0" y="730.7" width="6.0" height="2.3" fill="#d4d4d4"/><rect x="3487.0" y="730.7" width="2.0" height="2.3" fill="#ffd700"/><rect x="3489.0" y="730.7" width="6.0" height="2.3" fill="#dcdcaa"/><rect x="3495.0" y="730.7" width="2.0" height="2.3" fill="#ffd700"/><rect x="3497.0" y="730.7" width="10.0" height="2.3" fill="#d4d4d4"/><rect x="3507.0" y="730.7" width="2.0" height="2.3" fill="#ffd700"/><rect x="3509.0" y="730.7" width="2.0" height="2.3" fill="#d4d4d4"/><rect x="3513.0" y="730.7" width="2.0" height="2.3" fill="#b5cea8"/><rect x="3515.0" y="730.7" width="2.0" height="2.3" fill="#ffd700"/><rect x="3443.0" y="734.7" width="12.0" height="2.3" fill="#d4d4d4"/><rect x="3457.0" y="734.7" width="2.0" height="2.3" fill="#d4d4d4"/><rect x="3461.0" y="734.7" width="8.0" height="2.3" fill="#d4d4d4"/><rect x="3471.0" y="734.7" width="2.0" height="2.3" fill="#d4d4d4"/><rect x="3475.0" y="734.7" width="6.0" height="2.3" fill="#d4d4d4"/><rect x="3481.0" y="734.7" width="2.0" height="2.3" fill="#ffd700"/><rect x="3483.0" y="734.7" width="6.0" height="2.3" fill="#dcdcaa"/><rect x="3489.0" y="734.7" width="2.0" height="2.3" fill="#ffd700"/><rect x="3491.0" y="734.7" width="16.0" height="2.3" fill="#d4d4d4"/><rect x="3507.0" y="734.7" width="2.0" height="2.3" fill="#ffd700"/><rect x="3509.0" y="734.7" width="2.0" height="2.3" fill="#d4d4d4"/><rect x="3513.0" y="734.7" width="2.0" height="2.3" fill="#b5cea8"/><rect x="3515.0" y="734.7" width="2.0" height="2.3" fill="#ffd700"/><rect x="3443.0" y="738.7" width="12.0" height="2.3" fill="#c586c0"/><rect x="3457.0" y="738.7" width="2.0" height="2.3" fill="#ffd700"/><rect x="3459.0" y="738.7" width="22.0" height="2.3" fill="#ce9178"/><rect x="3481.0" y="738.7" width="2.0" height="2.3" fill="#d4d4d4"/><rect x="3485.0" y="738.7" width="18.0" height="2.3" fill="#d4d4d4"/><rect x="3503.0" y="738.7" width="2.0" height="2.3" fill="#d4d4d4"/><rect x="3507.0" y="738.7" width="16.0" height="2.3" fill="#ce9178"/><rect x="3523.0" y="738.7" width="2.0" height="2.3" fill="#d4d4d4"/><rect x="3527.0" y="738.7" width="12.0" height="2.3" fill="#d4d4d4"/><rect x="3539.0" y="738.7" width="2.0" height="2.3" fill="#ffd700"/><rect x="3435.0" y="746.7" width="4.0" height="2.3" fill="#c586c0"/><rect x="3441.0" y="746.7" width="16.0" height="2.3" fill="#d4d4d4"/><rect x="3459.0" y="746.7" width="2.0" height="2.3" fill="#d4d4d4"/><rect x="3461.0" y="746.7" width="2.0" height="2.3" fill="#d4d4d4"/><rect x="3465.0" y="746.7" width="20.0" height="2.3" fill="#ce9178"/><rect x="3485.0" y="746.7" width="2.0" height="2.3" fill="#d4d4d4"/><rect x="3443.0" y="750.7" width="8.0" height="2.3" fill="#d4d4d4"/><rect x="3451.0" y="750.7" width="2.0" height="2.3" fill="#ffd700"/><rect x="3453.0" y="750.7" width="2.0" height="2.3" fill="#ffd700"/><rect x="3443.0" y="754.7" width="10.0" height="2.3" fill="#dcdcaa"/><rect x="3453.0" y="754.7" width="2.0" height="2.3" fill="#ffd700"/><rect x="3455.0" y="754.7" width="16.0" height="2.3" fill="#d4d4d4"/><rect x="3471.0" y="754.7" width="2.0" height="2.3" fill="#ffd700"/><rect x="3473.0" y="754.7" width="10.0" height="2.3" fill="#d4d4d4"/><rect x="3483.0" y="754.7" width="2.0" height="2.3" fill="#d4d4d4"/><rect x="3487.0" y="754.7" width="2.0" height="2.3" fill="#ffd700"/><rect x="3489.0" y="754.7" width="2.0" height="2.3" fill="#b5cea8"/><rect x="3491.0" y="754.7" width="2.0" height="2.3" fill="#d4d4d4"/><rect x="3495.0" y="754.7" width="2.0" height="2.3" fill="#b5cea8"/><rect x="3497.0" y="754.7" width="2.0" height="2.3" fill="#d4d4d4"/><rect x="3501.0" y="754.7" width="4.0" height="2.3" fill="#b5cea8"/><rect x="3505.0" y="754.7" width="2.0" height="2.3" fill="#ffd700"/><rect x="3507.0" y="754.7" width="2.0" height="2.3" fill="#ffd700"/><rect x="3509.0" y="754.7" width="2.0" height="2.3" fill="#ffd700"/></g></svg>
<svg class="abs" style="left:32px;top:1907px" width="32" height="38" viewBox="0 0 32 38"><g fill="none" stroke="#ffffff" stroke-width="3"><path d="M2 14l12 12L2 38"/><path d="M30 2L18 13l12 11"/></g></svg>
<svg class="abs" style="left:119px;top:1906px" width="38" height="40" viewBox="0 0 38 40"><g fill="none" stroke="#cccccc" stroke-width="3"><circle cx="19" cy="20" r="16.5"/><path d="M12 13l14 14M26 13L12 27"/></g></svg>
<svg class="abs" style="left:194px;top:1906px" width="40" height="38" viewBox="0 0 40 38"><g fill="none" stroke="#cccccc" stroke-width="3" stroke-linejoin="round"><path d="M20 3L37 35H3z"/><path d="M20 14v11M20 28v3"/></g></svg>
<svg class="abs" style="left:310px;top:1906px" width="36" height="40" viewBox="0 0 36 40"><g fill="none" stroke="#cccccc" stroke-width="3"><circle cx="18" cy="14" r="3.5"/><path d="M9 5a13 13 0 0 0 0 18M27 5a13 13 0 0 1 0 18M4 1a19 19 0 0 0 0 26M32 1a19 19 0 0 1 0 26M18 18L9 38M18 18l9 20M12 31h12"/></g></svg>
<div class="ui" style="left:166px;top:1906px;font-size:34px;color:#cccccc;line-height:38px">0</div>
<div class="ui" style="left:241px;top:1906px;font-size:34px;color:#cccccc;line-height:38px">0</div>
<div class="ui" style="left:355px;top:1906px;font-size:34px;color:#cccccc;line-height:38px">0</div>
<svg class="abs" style="left:2613px;top:1907px" width="40" height="40" viewBox="0 0 40 40"><g fill="none" stroke="#cccccc" stroke-width="3"><circle cx="16" cy="16" r="13"/><path d="M25.5 25.5L37 37M16 9v14M9 16h14"/></g></svg>
<div class="ui" style="left:2704px;top:1905px;font-size:33px;color:#cccccc;line-height:38px;transform:scaleX(1.028);transform-origin:0 0">Ln 5, Col 7 (95 selected)</div>
<div class="ui" style="left:3118px;top:1905px;font-size:33px;color:#cccccc;line-height:38px;transform:scaleX(0.96);transform-origin:0 0">Spaces: 4</div>
<div class="ui" style="left:3306px;top:1905px;font-size:33px;color:#cccccc;line-height:38px;transform:scaleX(1.0);transform-origin:0 0">UTF-8</div>
<div class="ui" style="left:3443px;top:1905px;font-size:33px;color:#cccccc;line-height:38px;transform:scaleX(1.0);transform-origin:0 0">LF</div>
<div class="ui" style="left:3525px;top:1905px;font-size:33px;color:#cccccc;line-height:38px;transform:scaleX(1.12);transform-origin:0 0">Python</div>
<svg class="abs" style="left:1687px;top:917px" width="19" height="40" viewBox="0 0 19 40"><path d="M1.5 1.5h16v6h-5.5v24h5.5v7h-16v-7h5.5v-24h-5.5z" fill="#e6e6e6" stroke="#1a1a1a" stroke-width="1.6"/><path d="M9.5 8v23" stroke="#b8b8b8" stroke-width="1"/></svg>
</div></div></body></html>
